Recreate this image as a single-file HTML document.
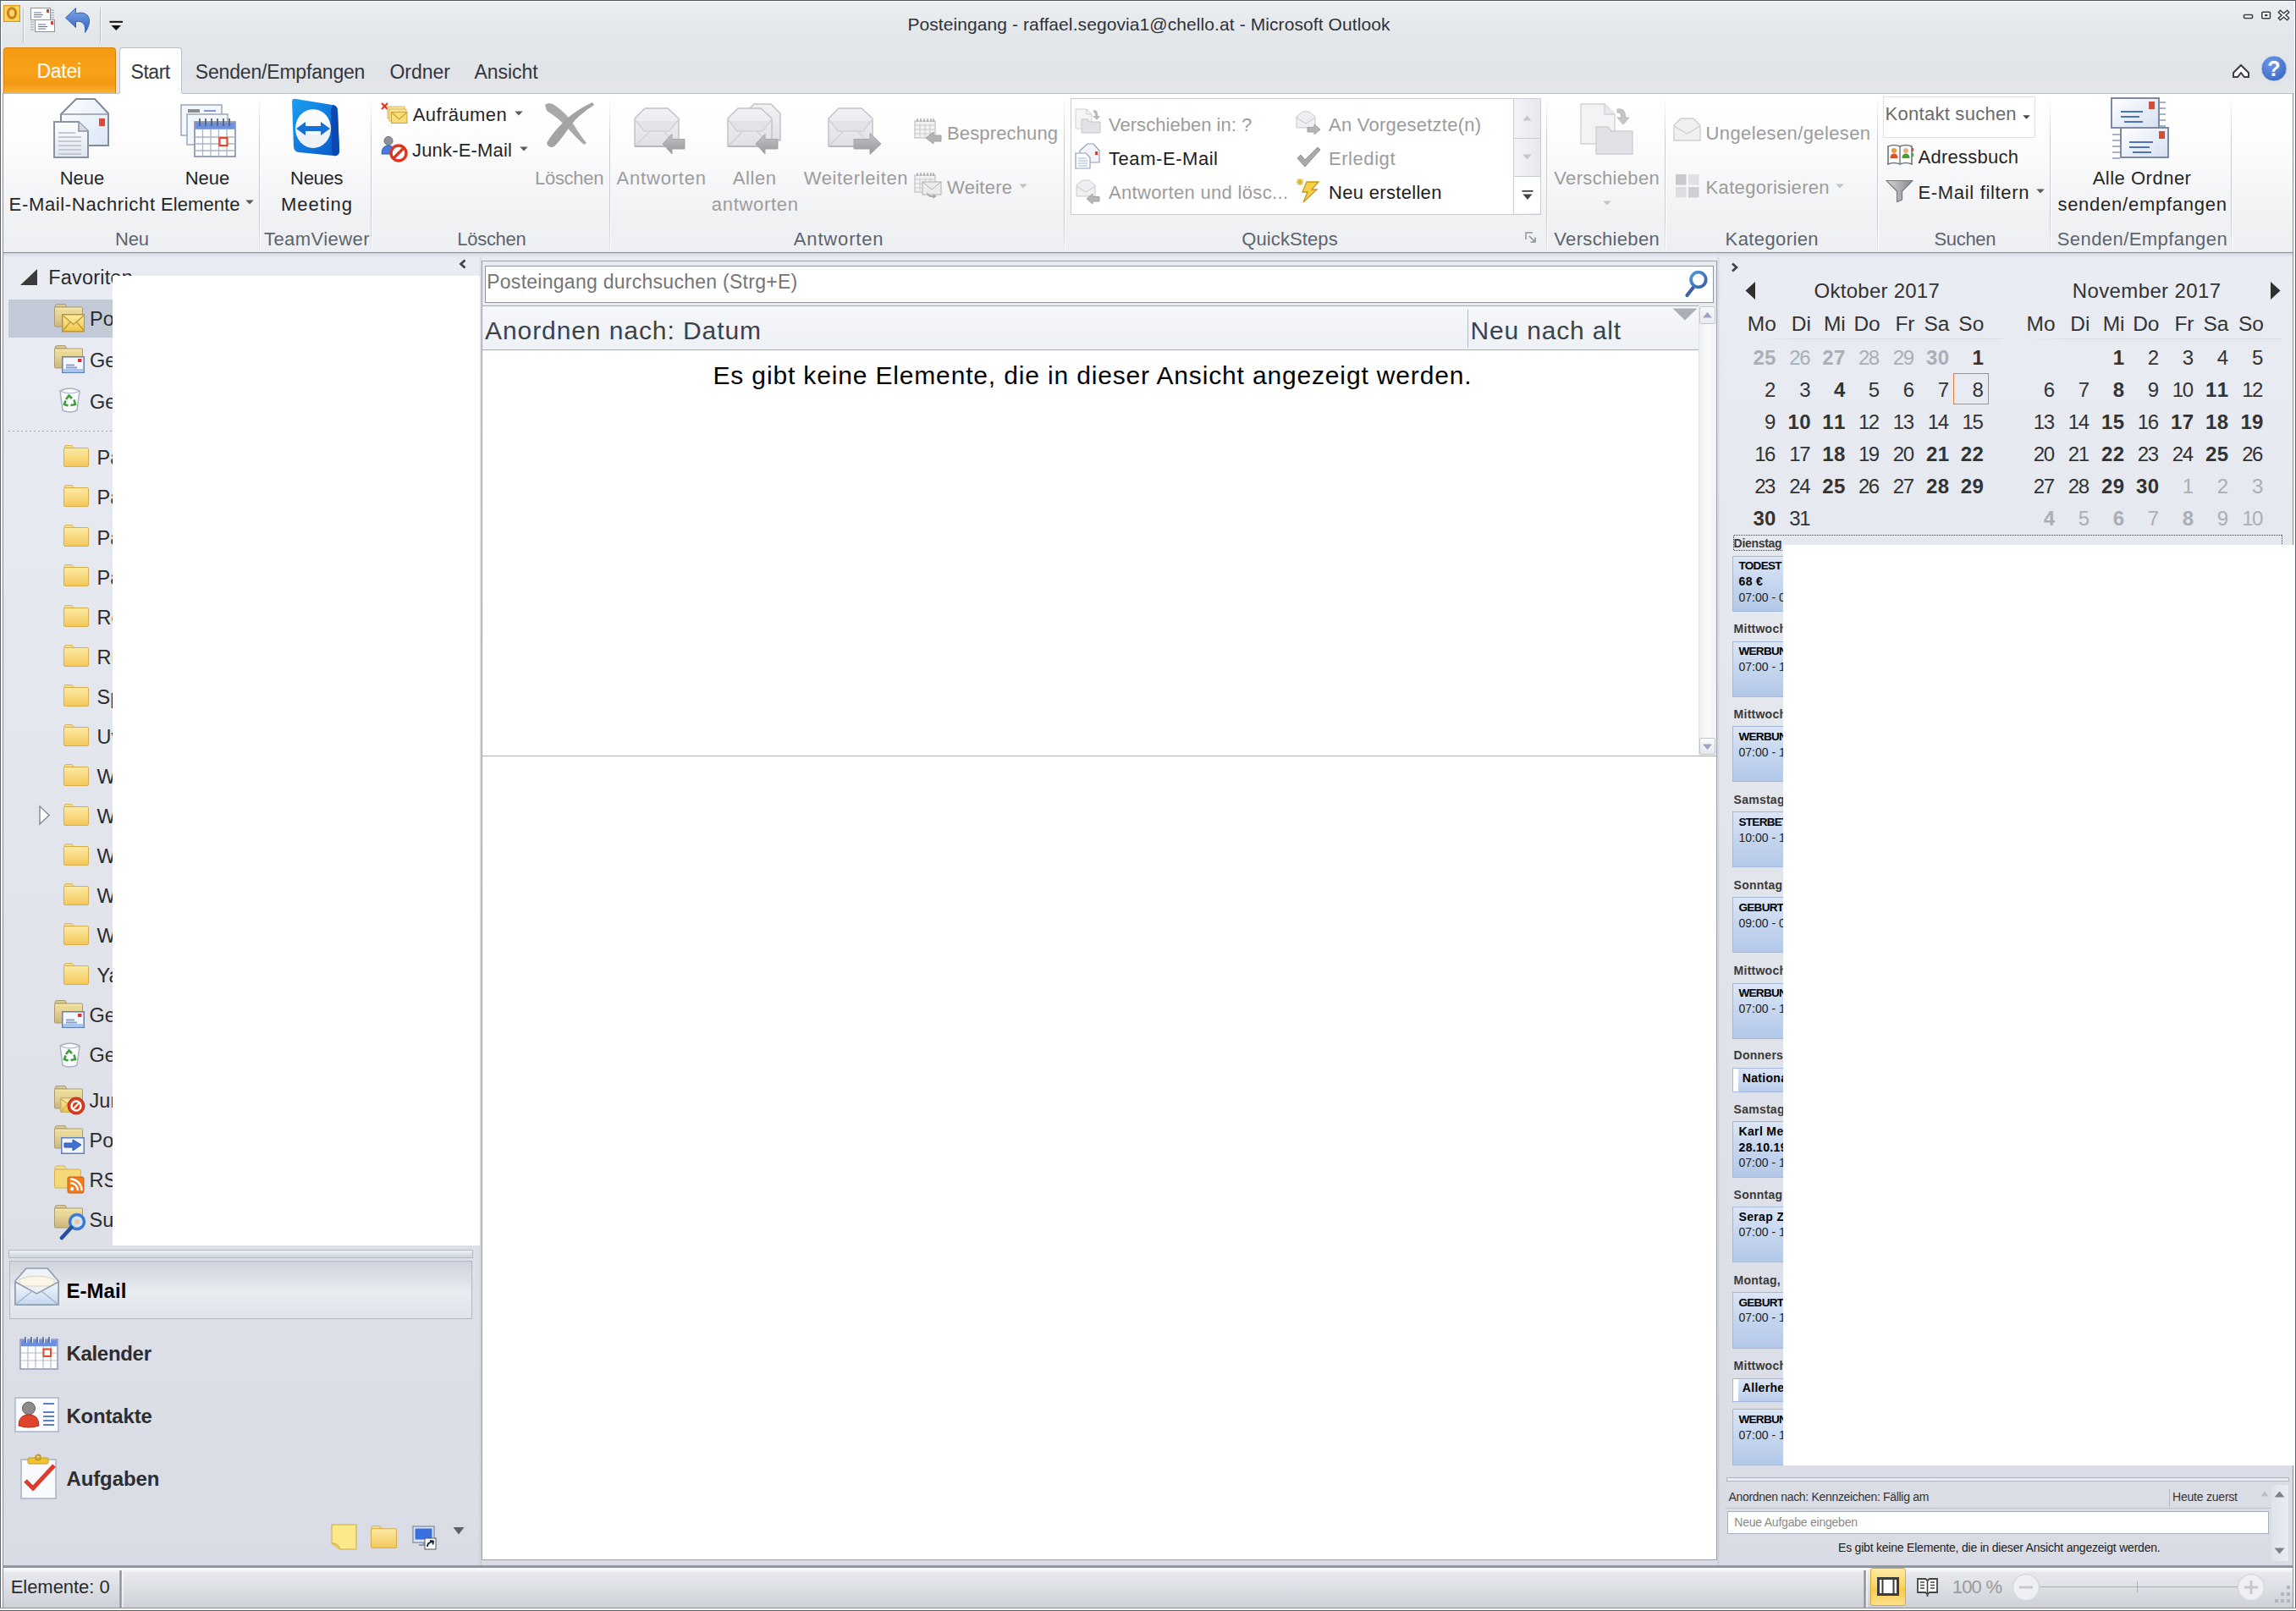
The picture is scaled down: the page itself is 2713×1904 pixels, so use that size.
<!DOCTYPE html>
<html lang="de"><head><meta charset="utf-8"><title>Posteingang - Microsoft Outlook</title>
<style>
html,body{margin:0;padding:0;}
body{width:2713px;height:1904px;overflow:hidden;position:relative;background:#dce0e6;font-family:"Liberation Sans",sans-serif;}
#w{position:absolute;left:0;top:0;width:2713px;height:1904px;overflow:hidden;}
#w div,#w span.t,#w svg{position:absolute;box-sizing:border-box;}
span.t{white-space:pre;display:block;}
</style></head><body><div id="w">
<div style="left:0px;top:0px;width:2713px;height:110px;background:linear-gradient(#ebeef0,#e4e7ea 40%,#e0e3e7 80%,#e5e7ea);"></div>
<div style="left:0px;top:0px;width:2713px;height:1px;background:#50555b;"></div>
<div style="left:1px;top:1px;width:2711px;height:1px;background:#fcfcfd;"></div>
<div style="left:0px;top:0px;width:1px;height:1904px;background:#5d636a;"></div>
<div style="left:1px;top:1px;width:1px;height:1904px;background:#fdfdfe;"></div>
<div style="left:2px;top:110px;width:1px;height:1904px;background:#fdfdfe;"></div>
<div style="left:3px;top:110px;width:1px;height:1904px;background:#8a8f97;"></div>
<div style="left:2709px;top:110px;width:1px;height:1904px;background:#8a8f97;"></div>
<div style="left:2710px;top:110px;width:1px;height:1904px;background:#fdfdfe;"></div>
<div style="left:2711px;top:1px;width:1px;height:1904px;background:#fdfdfe;"></div>
<div style="left:2712px;top:0px;width:1px;height:1904px;background:#5d636a;"></div>
<div style="left:0px;top:1900px;width:2713px;height:1px;background:#8b8f94;"></div>
<div style="left:0px;top:1901px;width:2713px;height:2px;background:#fdfdfe;"></div>
<div style="left:0px;top:1903px;width:2713px;height:1px;background:#5d636a;"></div>
<span class="t" style="left:1072.40px;top:18.00px;font-size:21px;line-height:21px;color:#2e3238;letter-spacing:0.087px;">Posteingang - raffael.segovia1@chello.at - Microsoft Outlook</span>
<svg style="left:2648px;top:10px" width="60" height="16" viewBox="0 0 60 16"><rect x="3.5" y="7.5" width="10" height="4" rx="1" fill="#fff" stroke="#3a3f46" stroke-width="1.6"/>
<rect x="24.8" y="4.3" width="9.6" height="7.4" rx="1" fill="#fff" stroke="#3a3f46" stroke-width="1.6"/><rect x="28" y="7" width="3.4" height="2.2" fill="#3a3f46"/>
<path d="M46.500 4.500 L54.500 11.500 M54.500 4.500 L46.500 11.500" stroke="#3a3f46" stroke-width="4.600" stroke-linecap="square"/><path d="M46.500 4.500 L54.500 11.500 M54.500 4.500 L46.500 11.500" stroke="#fff" stroke-width="1.700" stroke-linecap="square"/></svg>
<svg style="left:2636px;top:74px" width="24" height="20" viewBox="0 0 24 20"><path d="M3 17 L3 12 L12 3 L21 12 L21 17 L16 17 L12 12 L8 17 Z" fill="#fff" stroke="#3a3f46" stroke-width="2"/></svg>
<svg style="left:2670px;top:64px" width="34" height="34" viewBox="0 0 34 34"><defs><radialGradient id="hg" cx="0.4" cy="0.3" r="0.8"><stop offset="0" stop-color="#6c9ae6"/><stop offset="1" stop-color="#3864c0"/></radialGradient></defs>
<circle cx="17" cy="17" r="15" fill="url(#hg)" stroke="#c9d6f0" stroke-width="1"/>
<text x="17" y="26" font-family="Liberation Sans, sans-serif" font-weight="bold" font-size="25" fill="#fff" text-anchor="middle">?</text></svg>
<svg style="left:4px;top:6px" width="20" height="20" viewBox="0 0 20 20"><rect x="0.5" y="0.5" width="19" height="19" fill="#f6c63c" stroke="#d89b1e"/><rect x="2" y="2" width="16" height="16" fill="#fbe08a" opacity=".6"/>
<ellipse cx="10" cy="9.5" rx="4.6" ry="5.8" fill="none" stroke="#d17f0c" stroke-width="3"/></svg>
<div style="left:27px;top:9px;width:1px;height:41px;background:#b9bec6;"></div>
<div style="left:28px;top:9px;width:1px;height:41px;background:#f7f8fa;"></div>
<svg style="left:35px;top:8px" width="33" height="32" viewBox="0 0 33 32"><g stroke="#8b93a0" fill="#fff"><rect x="1.5" y="1.5" width="23" height="14"/><rect x="6.5" y="15.5" width="23" height="14" />
</g><g stroke="#9aa2ae" stroke-width="1"><path d="M25 4h4M25 7h4M25 10h4M25 13h4M1 18h4M1 21h4M1 24h4M1 27h4"/></g>
<rect x="20" y="3" width="3" height="4" fill="#d2423a"/><rect x="25" y="17" width="3" height="4" fill="#d2423a"/>
<path d="M5 7h9M5 9.5h11M5 12h9M10 21h9M10 23.500h11M10 26h9" stroke="#4f78b8" stroke-width="1.2"/></svg>
<svg style="left:76px;top:8px" width="34" height="32" viewBox="0 0 34 32"><defs><linearGradient id="ug" x1="0" y1="0" x2="0" y2="1"><stop offset="0" stop-color="#7fa8ea"/><stop offset="1" stop-color="#2f5fc0"/></linearGradient></defs>
<path d="M1.500 13 L13.500 1.500 L13.500 8 C26 4 36 13 24.500 30.500 C26 20.500 21 16 13.500 17.500 L13.500 24.500 Z" fill="url(#ug)" stroke="#3560b4" stroke-width="1"/></svg>
<div style="left:118px;top:9px;width:1px;height:41px;background:#b9bec6;"></div>
<div style="left:119px;top:9px;width:1px;height:41px;background:#f7f8fa;"></div>
<svg style="left:129px;top:24px" width="17" height="14" viewBox="0 0 17 14"><rect x="0.5" y="0.8" width="15.500" height="2" fill="#111"/><path d="M2.500 6 L14 6 L8.250 12 Z" fill="#111"/></svg>
<div style="left:4px;top:56px;width:133px;height:55px;border-radius:4px 4px 0 0;background:linear-gradient(#f39a12,#f8a21a 50%,#f49712 78%,#fbb63a);border:1px solid #d9820a;border-bottom:none;"></div>
<span class="t" style="left:43.50px;top:73.00px;font-size:23px;line-height:23px;color:#fff;letter-spacing:-0.298px;">Datei</span>
<div style="left:141px;top:56px;width:74px;height:56px;border-radius:4px 4px 0 0;background:#fff;border:1px solid #b9bfc8;border-bottom:none;"></div>
<span class="t" style="left:154.60px;top:74.00px;font-size:23px;line-height:23px;color:#33373d;letter-spacing:-0.492px;">Start</span>
<span class="t" style="left:230.80px;top:74.00px;font-size:23px;line-height:23px;color:#33373d;letter-spacing:-0.181px;">Senden/Empfangen</span>
<span class="t" style="left:460.40px;top:74.00px;font-size:23px;line-height:23px;color:#33373d;">Ordner</span>
<span class="t" style="left:560.40px;top:74.00px;font-size:23px;line-height:23px;color:#33373d;letter-spacing:-0.020px;">Ansicht</span>
<div style="left:4px;top:110px;width:2705px;height:189px;background:linear-gradient(#ffffff,#fcfcfd 35%,#f1f2f4 75%,#eeeff2);border-top:1px solid #b9bfc8;border-bottom:1px solid #8b9097;"></div>
<div style="left:141px;top:110px;width:74px;height:2px;background:#fff;"></div>
<div style="left:306px;top:114px;width:1px;height:181px;background:linear-gradient(rgba(200,205,212,0),#c6cbd2 30%,#c6cbd2 80%,rgba(200,205,212,.3));"></div>
<div style="left:307px;top:114px;width:1px;height:181px;background:linear-gradient(rgba(255,255,255,0),#fff 30%,#fff);"></div>
<div style="left:438px;top:114px;width:1px;height:181px;background:linear-gradient(rgba(200,205,212,0),#c6cbd2 30%,#c6cbd2 80%,rgba(200,205,212,.3));"></div>
<div style="left:439px;top:114px;width:1px;height:181px;background:linear-gradient(rgba(255,255,255,0),#fff 30%,#fff);"></div>
<div style="left:719.5px;top:114px;width:1px;height:181px;background:linear-gradient(rgba(200,205,212,0),#c6cbd2 30%,#c6cbd2 80%,rgba(200,205,212,.3));"></div>
<div style="left:720.5px;top:114px;width:1px;height:181px;background:linear-gradient(rgba(255,255,255,0),#fff 30%,#fff);"></div>
<div style="left:1257px;top:114px;width:1px;height:181px;background:linear-gradient(rgba(200,205,212,0),#c6cbd2 30%,#c6cbd2 80%,rgba(200,205,212,.3));"></div>
<div style="left:1258px;top:114px;width:1px;height:181px;background:linear-gradient(rgba(255,255,255,0),#fff 30%,#fff);"></div>
<div style="left:1827px;top:114px;width:1px;height:181px;background:linear-gradient(rgba(200,205,212,0),#c6cbd2 30%,#c6cbd2 80%,rgba(200,205,212,.3));"></div>
<div style="left:1828px;top:114px;width:1px;height:181px;background:linear-gradient(rgba(255,255,255,0),#fff 30%,#fff);"></div>
<div style="left:1967px;top:114px;width:1px;height:181px;background:linear-gradient(rgba(200,205,212,0),#c6cbd2 30%,#c6cbd2 80%,rgba(200,205,212,.3));"></div>
<div style="left:1968px;top:114px;width:1px;height:181px;background:linear-gradient(rgba(255,255,255,0),#fff 30%,#fff);"></div>
<div style="left:2218px;top:114px;width:1px;height:181px;background:linear-gradient(rgba(200,205,212,0),#c6cbd2 30%,#c6cbd2 80%,rgba(200,205,212,.3));"></div>
<div style="left:2219px;top:114px;width:1px;height:181px;background:linear-gradient(rgba(255,255,255,0),#fff 30%,#fff);"></div>
<div style="left:2422px;top:114px;width:1px;height:181px;background:linear-gradient(rgba(200,205,212,0),#c6cbd2 30%,#c6cbd2 80%,rgba(200,205,212,.3));"></div>
<div style="left:2423px;top:114px;width:1px;height:181px;background:linear-gradient(rgba(255,255,255,0),#fff 30%,#fff);"></div>
<div style="left:2636px;top:114px;width:1px;height:181px;background:linear-gradient(rgba(200,205,212,0),#c6cbd2 30%,#c6cbd2 80%,rgba(200,205,212,.3));"></div>
<div style="left:2637px;top:114px;width:1px;height:181px;background:linear-gradient(rgba(255,255,255,0),#fff 30%,#fff);"></div>
<span class="t" style="left:136.00px;top:272.00px;font-size:22px;line-height:22px;color:#5c6470;letter-spacing:-0.178px;">Neu</span>
<span class="t" style="left:312.00px;top:272.00px;font-size:22px;line-height:22px;color:#5c6470;letter-spacing:0.440px;">TeamViewer</span>
<span class="t" style="left:540.30px;top:272.00px;font-size:22px;line-height:22px;color:#5c6470;letter-spacing:-0.295px;">Löschen</span>
<span class="t" style="left:937.80px;top:272.00px;font-size:22px;line-height:22px;color:#5c6470;letter-spacing:0.844px;">Antworten</span>
<span class="t" style="left:1467.30px;top:272.00px;font-size:22px;line-height:22px;color:#5c6470;letter-spacing:0.101px;">QuickSteps</span>
<span class="t" style="left:1836.25px;top:272.00px;font-size:22px;line-height:22px;color:#5c6470;letter-spacing:0.342px;">Verschieben</span>
<span class="t" style="left:2038.60px;top:272.00px;font-size:22px;line-height:22px;color:#5c6470;letter-spacing:0.400px;">Kategorien</span>
<span class="t" style="left:2285.50px;top:272.00px;font-size:22px;line-height:22px;color:#5c6470;letter-spacing:-0.322px;">Suchen</span>
<span class="t" style="left:2430.70px;top:272.00px;font-size:22px;line-height:22px;color:#5c6470;letter-spacing:0.435px;">Senden/Empfangen</span>
<div style="left:4px;top:299px;width:2705px;height:1552px;background:linear-gradient(#cfd3dc 0,#e6e9f0 4px,#e9ecf2 8px,#d9dce4);"></div>
<div style="left:566px;top:303px;width:3px;height:1547px;background:linear-gradient(90deg,rgba(160,165,178,0),rgba(160,165,178,.35));"></div>
<svg style="left:541px;top:305px" width="12" height="14" viewBox="0 0 12 14"><path d="M8.500 2.500 L3.500 7 L8.500 11.500" fill="none" stroke="#3b4048" stroke-width="2.6"/></svg>
<svg style="left:22px;top:316px" width="24" height="23" viewBox="0 0 24 23"><path d="M2 21 L22 21 L22 2 Z" fill="#3a3a3a"/></svg>
<span class="t" style="left:57.30px;top:317.00px;font-size:23.5px;line-height:23.5px;color:#2b2b2b;letter-spacing:0.194px;">Favoriten</span>
<div style="left:10px;top:354px;width:556px;height:45px;background:#c3cad7;"></div>
<svg style="left:64px;top:358px" width="36" height="36" viewBox="0 0 36 36"><defs><linearGradient id="bf" x1="0" y1="0" x2="0" y2="1"><stop offset="0" stop-color="#f6e6a8"/><stop offset="1" stop-color="#cdb57c"/></linearGradient></defs>
<path d="M1 4 Q1 1.500 4 1.500 L13 1.500 L15 5 L1 5 Z" fill="#dccb92" stroke="#a99b76"/><rect x="0.500" y="5" width="33" height="23" rx="1" fill="url(#bf)" stroke="#a99b76"/>
<path d="M1 9.500 L33 9.500" stroke="#e9d690" stroke-width="2"/></svg>
<svg style="left:72.5px;top:371px" width="27.5" height="21.5" viewBox="0 0 27.5 21.5"><defs><linearGradient id="ey" x1="0" y1="0" x2="0" y2="1"><stop offset="0" stop-color="#fdeea0"/><stop offset="1" stop-color="#efc548"/></linearGradient></defs>
<rect x="0.750" y="0.750" width="26" height="20" fill="url(#ey)" stroke="#b9963a" stroke-width="1.500"/><path d="M1.500 2 L13.75 12.47 L26 2 M1.500 19.5 L9.9 9.675 M26 19.5 L17.6 9.675" fill="none" stroke="#b9963a" stroke-width="1.300"/></svg>
<span class="t" style="left:106.00px;top:366.00px;font-size:23.5px;line-height:23.5px;color:#2b2b2b;">Po</span>
<svg style="left:64px;top:407px" width="36" height="36" viewBox="0 0 36 36"><defs><linearGradient id="bf" x1="0" y1="0" x2="0" y2="1"><stop offset="0" stop-color="#f6e6a8"/><stop offset="1" stop-color="#cdb57c"/></linearGradient></defs>
<path d="M1 4 Q1 1.500 4 1.500 L13 1.500 L15 5 L1 5 Z" fill="#dccb92" stroke="#a99b76"/><rect x="0.500" y="5" width="33" height="23" rx="1" fill="url(#bf)" stroke="#a99b76"/>
<path d="M1 9.500 L33 9.500" stroke="#e9d690" stroke-width="2"/></svg>
<svg style="left:73px;top:421px" width="27" height="20" viewBox="0 0 27 20"><rect x="0.750" y="0.750" width="25.500" height="18.500" fill="#f4f7fc" stroke="#5e7fbf" stroke-width="1.500"/><rect x="19" y="3" width="4.500" height="4" fill="#d33b2f"/><path d="M5 10.500h10M5 13.500h13" stroke="#8aa0c8" stroke-width="2"/><rect x="1.500" y="15" width="24" height="3.500" fill="#aec3e8"/></svg>
<span class="t" style="left:106.00px;top:415.00px;font-size:23.5px;line-height:23.5px;color:#2b2b2b;">Ge</span>
<svg style="left:69px;top:457px" width="27" height="31" viewBox="0 0 27 31"><path d="M2 5 Q13.500 -1 25 5 L22 28 Q13.500 32 5 28 Z" fill="#f8fafc" stroke="#aab3c2" stroke-width="1.500"/><path d="M2.500 5.500 Q13.500 10 24.500 5.500" fill="none" stroke="#aab3c2" stroke-width="1.200"/>
<g fill="none" stroke="#3f9d3b" stroke-width="2.600"><path d="M9 15 L12.500 10.500 L16 14"/><path d="M18.500 15.500 L20 21 L14.500 22"/><path d="M11.500 22.500 L7 21 L8.500 16.500"/></g></svg>
<span class="t" style="left:106.00px;top:464.00px;font-size:23.5px;line-height:23.5px;color:#2b2b2b;">Ge</span>
<div style="left:10px;top:509px;width:556px;height:1px;background:repeating-linear-gradient(90deg,#9da5b1 0 2px,transparent 2px 5px);"></div>
<svg style="left:75px;top:525.3px" width="30" height="27" viewBox="0 0 30 27"><defs><linearGradient id="fg" x1="0" y1="0" x2="0" y2="1"><stop offset="0" stop-color="#fdeaa6"/><stop offset="1" stop-color="#f3c85a"/></linearGradient></defs>
<path d="M1 3.500 Q1 1.500 3 1.500 L10 1.500 L12.500 4.500 L1 4.500 Z" fill="#f6dc8c" stroke="#d9b65a" stroke-width="1"/>
<rect x="0.500" y="4.500" width="29" height="22" rx="1.500" fill="url(#fg)" stroke="#d7ae4a" stroke-width="1"/></svg>
<span class="t" style="left:114.50px;top:530.00px;font-size:23.5px;line-height:23.5px;color:#2b2b2b;">Pa</span>
<svg style="left:75px;top:572.35px" width="30" height="27" viewBox="0 0 30 27"><defs><linearGradient id="fg" x1="0" y1="0" x2="0" y2="1"><stop offset="0" stop-color="#fdeaa6"/><stop offset="1" stop-color="#f3c85a"/></linearGradient></defs>
<path d="M1 3.500 Q1 1.500 3 1.500 L10 1.500 L12.500 4.500 L1 4.500 Z" fill="#f6dc8c" stroke="#d9b65a" stroke-width="1"/>
<rect x="0.500" y="4.500" width="29" height="22" rx="1.500" fill="url(#fg)" stroke="#d7ae4a" stroke-width="1"/></svg>
<span class="t" style="left:114.50px;top:577.00px;font-size:23.5px;line-height:23.5px;color:#2b2b2b;">Pa</span>
<svg style="left:75px;top:619.4px" width="30" height="27" viewBox="0 0 30 27"><defs><linearGradient id="fg" x1="0" y1="0" x2="0" y2="1"><stop offset="0" stop-color="#fdeaa6"/><stop offset="1" stop-color="#f3c85a"/></linearGradient></defs>
<path d="M1 3.500 Q1 1.500 3 1.500 L10 1.500 L12.500 4.500 L1 4.500 Z" fill="#f6dc8c" stroke="#d9b65a" stroke-width="1"/>
<rect x="0.500" y="4.500" width="29" height="22" rx="1.500" fill="url(#fg)" stroke="#d7ae4a" stroke-width="1"/></svg>
<span class="t" style="left:114.50px;top:625.00px;font-size:23.5px;line-height:23.5px;color:#2b2b2b;">Pa</span>
<svg style="left:75px;top:666.45px" width="30" height="27" viewBox="0 0 30 27"><defs><linearGradient id="fg" x1="0" y1="0" x2="0" y2="1"><stop offset="0" stop-color="#fdeaa6"/><stop offset="1" stop-color="#f3c85a"/></linearGradient></defs>
<path d="M1 3.500 Q1 1.500 3 1.500 L10 1.500 L12.500 4.500 L1 4.500 Z" fill="#f6dc8c" stroke="#d9b65a" stroke-width="1"/>
<rect x="0.500" y="4.500" width="29" height="22" rx="1.500" fill="url(#fg)" stroke="#d7ae4a" stroke-width="1"/></svg>
<span class="t" style="left:114.50px;top:672.00px;font-size:23.5px;line-height:23.5px;color:#2b2b2b;">Pa</span>
<svg style="left:75px;top:713.5px" width="30" height="27" viewBox="0 0 30 27"><defs><linearGradient id="fg" x1="0" y1="0" x2="0" y2="1"><stop offset="0" stop-color="#fdeaa6"/><stop offset="1" stop-color="#f3c85a"/></linearGradient></defs>
<path d="M1 3.500 Q1 1.500 3 1.500 L10 1.500 L12.500 4.500 L1 4.500 Z" fill="#f6dc8c" stroke="#d9b65a" stroke-width="1"/>
<rect x="0.500" y="4.500" width="29" height="22" rx="1.500" fill="url(#fg)" stroke="#d7ae4a" stroke-width="1"/></svg>
<span class="t" style="left:114.50px;top:719.00px;font-size:23.5px;line-height:23.5px;color:#2b2b2b;">Re</span>
<svg style="left:75px;top:760.55px" width="30" height="27" viewBox="0 0 30 27"><defs><linearGradient id="fg" x1="0" y1="0" x2="0" y2="1"><stop offset="0" stop-color="#fdeaa6"/><stop offset="1" stop-color="#f3c85a"/></linearGradient></defs>
<path d="M1 3.500 Q1 1.500 3 1.500 L10 1.500 L12.500 4.500 L1 4.500 Z" fill="#f6dc8c" stroke="#d9b65a" stroke-width="1"/>
<rect x="0.500" y="4.500" width="29" height="22" rx="1.500" fill="url(#fg)" stroke="#d7ae4a" stroke-width="1"/></svg>
<span class="t" style="left:114.50px;top:766.00px;font-size:23.5px;line-height:23.5px;color:#2b2b2b;">Ru</span>
<svg style="left:75px;top:807.6px" width="30" height="27" viewBox="0 0 30 27"><defs><linearGradient id="fg" x1="0" y1="0" x2="0" y2="1"><stop offset="0" stop-color="#fdeaa6"/><stop offset="1" stop-color="#f3c85a"/></linearGradient></defs>
<path d="M1 3.500 Q1 1.500 3 1.500 L10 1.500 L12.500 4.500 L1 4.500 Z" fill="#f6dc8c" stroke="#d9b65a" stroke-width="1"/>
<rect x="0.500" y="4.500" width="29" height="22" rx="1.500" fill="url(#fg)" stroke="#d7ae4a" stroke-width="1"/></svg>
<span class="t" style="left:114.50px;top:813.00px;font-size:23.5px;line-height:23.5px;color:#2b2b2b;">Sp</span>
<svg style="left:75px;top:854.65px" width="30" height="27" viewBox="0 0 30 27"><defs><linearGradient id="fg" x1="0" y1="0" x2="0" y2="1"><stop offset="0" stop-color="#fdeaa6"/><stop offset="1" stop-color="#f3c85a"/></linearGradient></defs>
<path d="M1 3.500 Q1 1.500 3 1.500 L10 1.500 L12.500 4.500 L1 4.500 Z" fill="#f6dc8c" stroke="#d9b65a" stroke-width="1"/>
<rect x="0.500" y="4.500" width="29" height="22" rx="1.500" fill="url(#fg)" stroke="#d7ae4a" stroke-width="1"/></svg>
<span class="t" style="left:114.50px;top:860.00px;font-size:23.5px;line-height:23.5px;color:#2b2b2b;">Uv</span>
<svg style="left:75px;top:901.7px" width="30" height="27" viewBox="0 0 30 27"><defs><linearGradient id="fg" x1="0" y1="0" x2="0" y2="1"><stop offset="0" stop-color="#fdeaa6"/><stop offset="1" stop-color="#f3c85a"/></linearGradient></defs>
<path d="M1 3.500 Q1 1.500 3 1.500 L10 1.500 L12.500 4.500 L1 4.500 Z" fill="#f6dc8c" stroke="#d9b65a" stroke-width="1"/>
<rect x="0.500" y="4.500" width="29" height="22" rx="1.500" fill="url(#fg)" stroke="#d7ae4a" stroke-width="1"/></svg>
<span class="t" style="left:114.50px;top:907.00px;font-size:23.5px;line-height:23.5px;color:#2b2b2b;">W</span>
<svg style="left:75px;top:948.75px" width="30" height="27" viewBox="0 0 30 27"><defs><linearGradient id="fg" x1="0" y1="0" x2="0" y2="1"><stop offset="0" stop-color="#fdeaa6"/><stop offset="1" stop-color="#f3c85a"/></linearGradient></defs>
<path d="M1 3.500 Q1 1.500 3 1.500 L10 1.500 L12.500 4.500 L1 4.500 Z" fill="#f6dc8c" stroke="#d9b65a" stroke-width="1"/>
<rect x="0.500" y="4.500" width="29" height="22" rx="1.500" fill="url(#fg)" stroke="#d7ae4a" stroke-width="1"/></svg>
<span class="t" style="left:114.50px;top:954.00px;font-size:23.5px;line-height:23.5px;color:#2b2b2b;">W</span>
<svg style="left:75px;top:995.8px" width="30" height="27" viewBox="0 0 30 27"><defs><linearGradient id="fg" x1="0" y1="0" x2="0" y2="1"><stop offset="0" stop-color="#fdeaa6"/><stop offset="1" stop-color="#f3c85a"/></linearGradient></defs>
<path d="M1 3.500 Q1 1.500 3 1.500 L10 1.500 L12.500 4.500 L1 4.500 Z" fill="#f6dc8c" stroke="#d9b65a" stroke-width="1"/>
<rect x="0.500" y="4.500" width="29" height="22" rx="1.500" fill="url(#fg)" stroke="#d7ae4a" stroke-width="1"/></svg>
<span class="t" style="left:114.50px;top:1001.00px;font-size:23.5px;line-height:23.5px;color:#2b2b2b;">W</span>
<svg style="left:75px;top:1042.85px" width="30" height="27" viewBox="0 0 30 27"><defs><linearGradient id="fg" x1="0" y1="0" x2="0" y2="1"><stop offset="0" stop-color="#fdeaa6"/><stop offset="1" stop-color="#f3c85a"/></linearGradient></defs>
<path d="M1 3.500 Q1 1.500 3 1.500 L10 1.500 L12.500 4.500 L1 4.500 Z" fill="#f6dc8c" stroke="#d9b65a" stroke-width="1"/>
<rect x="0.500" y="4.500" width="29" height="22" rx="1.500" fill="url(#fg)" stroke="#d7ae4a" stroke-width="1"/></svg>
<span class="t" style="left:114.50px;top:1048.00px;font-size:23.5px;line-height:23.5px;color:#2b2b2b;">W</span>
<svg style="left:75px;top:1089.9px" width="30" height="27" viewBox="0 0 30 27"><defs><linearGradient id="fg" x1="0" y1="0" x2="0" y2="1"><stop offset="0" stop-color="#fdeaa6"/><stop offset="1" stop-color="#f3c85a"/></linearGradient></defs>
<path d="M1 3.500 Q1 1.500 3 1.500 L10 1.500 L12.500 4.500 L1 4.500 Z" fill="#f6dc8c" stroke="#d9b65a" stroke-width="1"/>
<rect x="0.500" y="4.500" width="29" height="22" rx="1.500" fill="url(#fg)" stroke="#d7ae4a" stroke-width="1"/></svg>
<span class="t" style="left:114.50px;top:1095.00px;font-size:23.5px;line-height:23.5px;color:#2b2b2b;">W</span>
<svg style="left:75px;top:1136.95px" width="30" height="27" viewBox="0 0 30 27"><defs><linearGradient id="fg" x1="0" y1="0" x2="0" y2="1"><stop offset="0" stop-color="#fdeaa6"/><stop offset="1" stop-color="#f3c85a"/></linearGradient></defs>
<path d="M1 3.500 Q1 1.500 3 1.500 L10 1.500 L12.500 4.500 L1 4.500 Z" fill="#f6dc8c" stroke="#d9b65a" stroke-width="1"/>
<rect x="0.500" y="4.500" width="29" height="22" rx="1.500" fill="url(#fg)" stroke="#d7ae4a" stroke-width="1"/></svg>
<span class="t" style="left:114.50px;top:1142.00px;font-size:23.5px;line-height:23.5px;color:#2b2b2b;">Ya</span>
<svg style="left:45px;top:951px" width="15" height="25" viewBox="0 0 15 25"><path d="M2 2 L13 12.500 L2 23 Z" fill="#fff" stroke="#8a8f98" stroke-width="1.500"/></svg>
<svg style="left:64px;top:1181px" width="36" height="36" viewBox="0 0 36 36"><defs><linearGradient id="bf" x1="0" y1="0" x2="0" y2="1"><stop offset="0" stop-color="#f6e6a8"/><stop offset="1" stop-color="#cdb57c"/></linearGradient></defs>
<path d="M1 4 Q1 1.500 4 1.500 L13 1.500 L15 5 L1 5 Z" fill="#dccb92" stroke="#a99b76"/><rect x="0.500" y="5" width="33" height="23" rx="1" fill="url(#bf)" stroke="#a99b76"/>
<path d="M1 9.500 L33 9.500" stroke="#e9d690" stroke-width="2"/></svg>
<svg style="left:73px;top:1195px" width="27" height="20" viewBox="0 0 27 20"><rect x="0.750" y="0.750" width="25.500" height="18.500" fill="#f4f7fc" stroke="#5e7fbf" stroke-width="1.500"/><rect x="19" y="3" width="4.500" height="4" fill="#d33b2f"/><path d="M5 10.500h10M5 13.500h13" stroke="#8aa0c8" stroke-width="2"/><rect x="1.500" y="15" width="24" height="3.500" fill="#aec3e8"/></svg>
<span class="t" style="left:105.60px;top:1189.00px;font-size:23.5px;line-height:23.5px;color:#2b2b2b;">Ge</span>
<svg style="left:69px;top:1231px" width="27" height="31" viewBox="0 0 27 31"><path d="M2 5 Q13.500 -1 25 5 L22 28 Q13.500 32 5 28 Z" fill="#f8fafc" stroke="#aab3c2" stroke-width="1.500"/><path d="M2.500 5.500 Q13.500 10 24.500 5.500" fill="none" stroke="#aab3c2" stroke-width="1.200"/>
<g fill="none" stroke="#3f9d3b" stroke-width="2.600"><path d="M9 15 L12.500 10.500 L16 14"/><path d="M18.500 15.500 L20 21 L14.500 22"/><path d="M11.500 22.500 L7 21 L8.500 16.500"/></g></svg>
<span class="t" style="left:105.60px;top:1236.00px;font-size:23.5px;line-height:23.5px;color:#2b2b2b;">Ge</span>
<svg style="left:64px;top:1282px" width="36" height="36" viewBox="0 0 36 36"><defs><linearGradient id="bf" x1="0" y1="0" x2="0" y2="1"><stop offset="0" stop-color="#f6e6a8"/><stop offset="1" stop-color="#cdb57c"/></linearGradient></defs>
<path d="M1 4 Q1 1.500 4 1.500 L13 1.500 L15 5 L1 5 Z" fill="#dccb92" stroke="#a99b76"/><rect x="0.500" y="5" width="33" height="23" rx="1" fill="url(#bf)" stroke="#a99b76"/>
<path d="M1 9.500 L33 9.500" stroke="#e9d690" stroke-width="2"/></svg>
<svg style="left:71px;top:1297px" width="25" height="18" viewBox="0 0 25 18"><defs><linearGradient id="ey" x1="0" y1="0" x2="0" y2="1"><stop offset="0" stop-color="#fdeea0"/><stop offset="1" stop-color="#efc548"/></linearGradient></defs>
<rect x="0.750" y="0.750" width="23.5" height="16.5" fill="url(#ey)" stroke="#c8b070" stroke-width="1.500"/><path d="M1.500 2 L12.5 10.44 L23.5 2 M1.500 16 L9 8.1 M23.5 16 L16 8.1" fill="none" stroke="#c8b070" stroke-width="1.300"/></svg>
<svg style="left:79px;top:1296px" width="22" height="22" viewBox="0 0 22 22"><circle cx="11" cy="11" r="10" fill="#dc3a1e" stroke="#b52a12"/><circle cx="11" cy="11" r="5.500" fill="none" stroke="#fff" stroke-width="2.400"/><path d="M7 15 L15 7" stroke="#fff" stroke-width="2.400"/></svg>
<span class="t" style="left:105.60px;top:1290.00px;font-size:23.5px;line-height:23.5px;color:#2b2b2b;">Jun</span>
<svg style="left:64px;top:1329px" width="36" height="36" viewBox="0 0 36 36"><defs><linearGradient id="bf" x1="0" y1="0" x2="0" y2="1"><stop offset="0" stop-color="#f6e6a8"/><stop offset="1" stop-color="#cdb57c"/></linearGradient></defs>
<path d="M1 4 Q1 1.500 4 1.500 L13 1.500 L15 5 L1 5 Z" fill="#dccb92" stroke="#a99b76"/><rect x="0.500" y="5" width="33" height="23" rx="1" fill="url(#bf)" stroke="#a99b76"/>
<path d="M1 9.500 L33 9.500" stroke="#e9d690" stroke-width="2"/></svg>
<svg style="left:72px;top:1344px" width="28" height="20" viewBox="0 0 28 20"><rect x="0.750" y="0.750" width="26.500" height="18.500" fill="#f1f5fb" stroke="#5e7fbf" stroke-width="1.500"/><path d="M4 12 L14 12 L14 16 L24 9 L14 3 L14 7 L4 7 Z" fill="#3f73d6" stroke="#2a55ae"/></svg>
<span class="t" style="left:105.60px;top:1337.00px;font-size:23.5px;line-height:23.5px;color:#2b2b2b;">Po</span>
<svg style="left:64px;top:1376px" width="36" height="36" viewBox="0 0 36 36"><path d="M1 5 Q1 2 4 2 L12 2 L15 6 L1 6 Z" fill="#f3dc8c" stroke="#d3b256"/><rect x="0.500" y="6" width="31" height="22" rx="1.500" fill="#f7d878" stroke="#d3b256"/>
<rect x="16" y="15" width="19" height="19" rx="2" fill="#f07c1c" stroke="#c85e0c"/><circle cx="21" cy="29" r="2.200" fill="#fff"/><path d="M19 22 A9 9 0 0 1 28 31 M19 17.500 A13.500 13.500 0 0 1 32.500 31" fill="none" stroke="#fff" stroke-width="2.400"/></svg>
<span class="t" style="left:105.60px;top:1384.00px;font-size:23.5px;line-height:23.5px;color:#2b2b2b;">RS</span>
<svg style="left:64px;top:1423px" width="36" height="36" viewBox="0 0 36 36"><defs><linearGradient id="bf" x1="0" y1="0" x2="0" y2="1"><stop offset="0" stop-color="#f6e6a8"/><stop offset="1" stop-color="#cdb57c"/></linearGradient></defs>
<path d="M1 4 Q1 1.500 4 1.500 L13 1.500 L15 5 L1 5 Z" fill="#dccb92" stroke="#a99b76"/><rect x="0.500" y="5" width="33" height="23" rx="1" fill="url(#bf)" stroke="#a99b76"/>
<path d="M1 9.500 L33 9.500" stroke="#e9d690" stroke-width="2"/></svg>
<svg style="left:70px;top:1432px" width="34" height="34" viewBox="0 0 34 34"><circle cx="21" cy="12" r="8.500" fill="#cfe3fa" stroke="#3e78d0" stroke-width="3.500"/><circle cx="21" cy="12" r="3" fill="#f6c890"/><path d="M14 19 L3 31" stroke="#274f9c" stroke-width="4.500" stroke-linecap="round"/></svg>
<span class="t" style="left:105.60px;top:1431.00px;font-size:23.5px;line-height:23.5px;color:#2b2b2b;">Su</span>
<div style="left:133px;top:326px;width:434px;height:1145.5px;background:#fff;"></div>
<div style="left:10px;top:1477px;width:549px;height:10px;background:linear-gradient(#eceff3,#d0d5dd);border:1px solid #b3bac5;"></div>
<div style="left:11px;top:1490px;width:547px;height:69px;background:linear-gradient(#cfd4dc,#e9ecf1 55%,#dfe3e9);border:1px solid #b2b9c4;"></div>
<svg style="left:17px;top:1496px" width="53" height="47" viewBox="0 0 53 47"><defs><linearGradient id="eg" x1="0" y1="0" x2="0" y2="1"><stop offset="0" stop-color="#f4f8fd"/><stop offset="1" stop-color="#c4d8f0"/></linearGradient></defs>
<path d="M1 18 L14 3 L39 3 L52 18 L52 46 L1 46 Z" fill="#eef3fa" stroke="#8d99ab" stroke-width="1.500"/>
<path d="M6 16 Q26 8 47 16 L47 24 L6 24 Z" fill="#fbf6e4" stroke="#d8d2bc"/>
<path d="M1 19 L26.500 33 L52 19 L52 46 L1 46 Z" fill="url(#eg)" stroke="#8d99ab" stroke-width="1.500"/><path d="M1 46 L21 30 M52 46 L32 30" stroke="#9fb0c8" stroke-width="1.200"/></svg>
<span class="t" style="left:78.40px;top:1514.00px;font-size:24px;line-height:24px;color:#000;font-weight:bold;letter-spacing:0.066px;">E-Mail</span>
<svg style="left:23px;top:1579px" width="46" height="40" viewBox="0 0 46 40"><rect x="1" y="4" width="44" height="35" fill="#fff" stroke="#8a98b4" stroke-width="1.500"/><rect x="1.700" y="4.700" width="42.600" height="7.500" fill="#6c8fe0"/>
<g stroke="#b3bccd" stroke-width="1.200"><path d="M1 20h44M1 29h44M10 12v27M19 12v27M28 12v27M37 12v27"/></g>
<g stroke="#5b6a86" stroke-width="1.600"><path d="M7 1v7M14 1v7M21 1v7M28 1v7M35 1v7"/></g><g stroke="#fff" stroke-width="1"><path d="M8.500 2v6M15.500 2v6M22.500 2v6M29.500 2v6M36.500 2v6"/></g>
<rect x="28.500" y="15.500" width="8.500" height="8.500" fill="#fff" stroke="#e24a2a" stroke-width="2"/></svg>
<span class="t" style="left:78.40px;top:1588.00px;font-size:24px;line-height:24px;color:#2e2e2e;font-weight:bold;letter-spacing:-0.300px;">Kalender</span>
<svg style="left:17px;top:1651px" width="53" height="42" viewBox="0 0 53 42"><rect x="1" y="1" width="51" height="40" fill="#f9fbfe" stroke="#a9b5cb" stroke-width="1.500"/>
<circle cx="17" cy="13.500" r="7.500" fill="#8c8c8c" stroke="#5e5e5e"/><path d="M5 34 Q5 21 17 21 Q29 21 29 34 Q17 38 5 34 Z" fill="#e0442a" stroke="#b52f1a"/>
<g stroke="#5b80cc" stroke-width="2"><path d="M34 8h13M34 18h13M34 23h13M34 28h13M34 33h13"/></g></svg>
<span class="t" style="left:78.40px;top:1662.00px;font-size:24px;line-height:24px;color:#2e2e2e;font-weight:bold;letter-spacing:-0.182px;">Kontakte</span>
<svg style="left:24px;top:1718px" width="44" height="54" viewBox="0 0 44 54"><rect x="1" y="7" width="41" height="46" fill="#f8fafd" stroke="#a8b2c6" stroke-width="1.500"/><rect x="9" y="5" width="24" height="7" rx="1.500" fill="#f1c232" stroke="#c89a1a"/><circle cx="21" cy="4.500" r="3" fill="none" stroke="#c89a1a" stroke-width="1.800"/>
<path d="M6 32 L15 41 L40 14" fill="none" stroke="#e03a2a" stroke-width="5"/></svg>
<span class="t" style="left:78.40px;top:1736.00px;font-size:24px;line-height:24px;color:#2e2e2e;font-weight:bold;letter-spacing:-0.093px;">Aufgaben</span>
<svg style="left:391px;top:1801px" width="31" height="31" viewBox="0 0 31 31"><path d="M1 1 L30 1 L30 30 L11 30 L1 23 Z" fill="#fbe98c" stroke="#d9bf55" stroke-width="1.500"/><path d="M1 23 Q8 22 11 30" fill="#e8cf60" stroke="#c9ad45"/></svg>
<svg style="left:438px;top:1802px" width="31" height="28" viewBox="0 0 30 27"><defs><linearGradient id="fg" x1="0" y1="0" x2="0" y2="1"><stop offset="0" stop-color="#fdeaa6"/><stop offset="1" stop-color="#f3c85a"/></linearGradient></defs>
<path d="M1 3.500 Q1 1.500 3 1.500 L10 1.500 L12.500 4.500 L1 4.500 Z" fill="#f6dc8c" stroke="#d9b65a" stroke-width="1"/>
<rect x="0.500" y="4.500" width="29" height="22" rx="1.500" fill="url(#fg)" stroke="#d7ae4a" stroke-width="1"/></svg>
<svg style="left:487px;top:1803px" width="29" height="29" viewBox="0 0 29 29"><rect x="1" y="1" width="25" height="19" fill="#dfe7f5" stroke="#8a96ab" stroke-width="1.500"/><rect x="3.500" y="3.500" width="20" height="13" fill="#3a6fe0"/><path d="M8 23h11M13.500 20v3" stroke="#8a96ab" stroke-width="2"/><rect x="15" y="15" width="13" height="13" fill="#fff" stroke="#555"/><path d="M18 25 Q18 20 24 19 M21 18 L25 18.500 L24.500 22.500" fill="none" stroke="#123" stroke-width="1.800"/></svg>
<svg style="left:535px;top:1804px" width="14" height="10" viewBox="0 0 14 10"><path d="M0.500 1 L13.500 1 L7 9.500 Z" fill="#5a5f68"/></svg>
<div style="left:4px;top:1850px;width:2705px;height:3px;background:#9196a0;"></div>
<div style="left:4px;top:1853px;width:2705px;height:47px;background:linear-gradient(#fbfcfd 0,#f3f5f8 3px,#e7e9ee 6px,#dcdfe4 50%,#cdd0d6);"></div>
<span class="t" style="left:12.70px;top:1865.00px;font-size:22px;line-height:22px;color:#2b2b2b;letter-spacing:-0.039px;">Elemente: 0</span>
<div style="left:141px;top:1856px;width:3px;height:44px;background:linear-gradient(90deg,#b9bcc2,#8d9096 50%,#b9bcc2);"></div>
<div style="left:144px;top:1856px;width:2px;height:44px;background:rgba(255,255,255,.55);"></div>
<div style="left:569px;top:308px;width:1460px;height:1536px;background:#fff;border:1px solid #9ea3ab;"></div>
<div style="left:570px;top:309px;width:1458px;height:53px;background:#e8ebf1;"></div>
<div style="left:573px;top:314px;width:1452px;height:44px;background:#fff;border:1px solid #9196a0;"></div>
<span class="t" style="left:575.20px;top:322.00px;font-size:23px;line-height:23px;color:#757575;letter-spacing:0.271px;">Posteingang durchsuchen (Strg+E)</span>
<svg style="left:1988px;top:319px" width="30" height="34" viewBox="0 0 30 34"><defs><linearGradient id="mg" x1="0" y1="0" x2="1" y2="1"><stop offset="0" stop-color="#4f9be0"/><stop offset="1" stop-color="#3a5ca8"/></linearGradient></defs>
<path d="M5.500 30 L13 20.500" stroke="#3d62a4" stroke-width="4.200" stroke-linecap="round"/><circle cx="18.900" cy="11.500" r="8.800" fill="#fff" stroke="url(#mg)" stroke-width="3.800"/></svg>
<div style="left:570px;top:361px;width:1437px;height:53px;background:linear-gradient(#f5f7fa,#eef1f5);border-top:1px solid #a4a9b2;border-bottom:1px solid #a9aeb7;"></div>
<span class="t" style="left:573.00px;top:376.00px;font-size:30px;line-height:30px;color:#3c424b;letter-spacing:0.921px;">Anordnen nach: Datum</span>
<div style="left:1733.5px;top:366px;width:1px;height:45px;background:#b5bbc5;"></div>
<span class="t" style="left:1737.60px;top:376.00px;font-size:30px;line-height:30px;color:#3c424b;letter-spacing:0.815px;">Neu nach alt</span>
<svg style="left:1976px;top:364px" width="30" height="15" viewBox="0 0 30 15"><path d="M0.500 0.500 L29.500 0.500 L15 14.500 Z" fill="#a9aeb7"/></svg>
<div style="left:2007px;top:362px;width:21px;height:532px;background:linear-gradient(90deg,#eceef1,#fbfbfc 50%,#f0f2f4);border-left:1px solid #dfe2e7;"></div>
<div style="left:2007.5px;top:362px;width:19.5px;height:20.5px;background:linear-gradient(#f6f7f9,#e9ebef);border:1px solid #c3c8d0;border-radius:2px;"></div>
<svg style="left:2012px;top:369px" width="11" height="7" viewBox="0 0 11 7"><path d="M0 6.500 L5.500 0 L11 6.500 Z" fill="#9da2bd"/></svg>
<div style="left:2008px;top:872px;width:19px;height:20px;background:linear-gradient(#fafbfc,#e4e7ec);border:1px solid #bfc5ce;border-radius:2px;"></div>
<svg style="left:2012px;top:879px" width="11" height="7" viewBox="0 0 11 7"><path d="M0 0.500 L5.500 7 L11 0.500 Z" fill="#9da2bd"/></svg>
<span class="t" style="left:842.50px;top:429.00px;font-size:30px;line-height:30px;color:#000;letter-spacing:0.842px;">Es gibt keine Elemente, die in dieser Ansicht angezeigt werden.</span>
<div style="left:570px;top:893px;width:1458px;height:1px;background:#a7aeb9;"></div>
<div style="left:2029px;top:303px;width:4px;height:1547px;background:linear-gradient(90deg,rgba(160,165,178,.3),rgba(160,165,178,0));"></div>
<svg style="left:2044px;top:309px" width="12" height="14" viewBox="0 0 12 14"><path d="M3 2.500 L8 7 L3 11.500" fill="none" stroke="#3b4048" stroke-width="2.600"/></svg>
<svg style="left:2061px;top:332px" width="14" height="23" viewBox="0 0 14 23"><path d="M13 1 L1.500 11.500 L13 22 Z" fill="#2f2f2f"/></svg>
<svg style="left:2682px;top:332px" width="14" height="23" viewBox="0 0 14 23"><path d="M1 1 L12.500 11.500 L1 22 Z" fill="#2f2f2f"/></svg>
<span class="t" style="left:2143.60px;top:332.00px;font-size:24px;line-height:24px;color:#333;letter-spacing:0.253px;">Oktober 2017</span>
<span class="t" style="left:2448.80px;top:332.00px;font-size:24px;line-height:24px;color:#333;letter-spacing:0.371px;">November 2017</span>
<span class="t" style="left:2064.87px;top:371.00px;font-size:24.5px;line-height:24.5px;color:#333;">Mo</span>
<span class="t" style="left:2116.86px;top:371.00px;font-size:24.5px;line-height:24.5px;color:#333;">Di</span>
<span class="t" style="left:2154.95px;top:371.00px;font-size:24.5px;line-height:24.5px;color:#333;">Mi</span>
<span class="t" style="left:2190.38px;top:371.00px;font-size:24.5px;line-height:24.5px;color:#333;">Do</span>
<span class="t" style="left:2239.38px;top:371.00px;font-size:24.5px;line-height:24.5px;color:#333;">Fr</span>
<span class="t" style="left:2273.53px;top:371.00px;font-size:24.5px;line-height:24.5px;color:#333;">Sa</span>
<span class="t" style="left:2314.33px;top:371.00px;font-size:24.5px;line-height:24.5px;color:#333;">So</span>
<span class="t" style="left:2394.47px;top:371.00px;font-size:24.5px;line-height:24.5px;color:#333;">Mo</span>
<span class="t" style="left:2446.36px;top:371.00px;font-size:24.5px;line-height:24.5px;color:#333;">Di</span>
<span class="t" style="left:2484.65px;top:371.00px;font-size:24.5px;line-height:24.5px;color:#333;">Mi</span>
<span class="t" style="left:2520.18px;top:371.00px;font-size:24.5px;line-height:24.5px;color:#333;">Do</span>
<span class="t" style="left:2569.38px;top:371.00px;font-size:24.5px;line-height:24.5px;color:#333;">Fr</span>
<span class="t" style="left:2603.53px;top:371.00px;font-size:24.5px;line-height:24.5px;color:#333;">Sa</span>
<span class="t" style="left:2644.93px;top:371.00px;font-size:24.5px;line-height:24.5px;color:#333;">So</span>
<div style="left:2077px;top:400px;width:289px;height:1px;background:linear-gradient(90deg,rgba(215,219,226,0),#d9dde3 15%);"></div>
<div style="left:2398px;top:400px;width:298px;height:1px;background:linear-gradient(90deg,rgba(215,219,226,0),#d9dde3 15%);"></div>
<div style="left:2308px;top:440.5px;width:41.5px;height:37.5px;border:1px solid #e0813a;"></div>
<span class="t" style="left:2071.40px;top:411.00px;font-size:24px;line-height:24px;color:#a9afb8;font-weight:bold;letter-spacing:0.308px;">25</span>
<span class="t" style="left:2114.30px;top:411.00px;font-size:24px;line-height:24px;color:#a9afb8;letter-spacing:-1.492px;">26</span>
<span class="t" style="left:2153.30px;top:411.00px;font-size:24px;line-height:24px;color:#a9afb8;font-weight:bold;letter-spacing:0.308px;">27</span>
<span class="t" style="left:2196.00px;top:411.00px;font-size:24px;line-height:24px;color:#a9afb8;letter-spacing:-1.492px;">28</span>
<span class="t" style="left:2236.80px;top:411.00px;font-size:24px;line-height:24px;color:#a9afb8;letter-spacing:-1.492px;">29</span>
<span class="t" style="left:2276.00px;top:411.00px;font-size:24px;line-height:24px;color:#a9afb8;font-weight:bold;letter-spacing:0.308px;">30</span>
<span class="t" style="left:2330.45px;top:411.00px;font-size:24px;line-height:24px;color:#333;font-weight:bold;">1</span>
<span class="t" style="left:2085.05px;top:449.00px;font-size:24px;line-height:24px;color:#333;">2</span>
<span class="t" style="left:2126.15px;top:449.00px;font-size:24px;line-height:24px;color:#333;">3</span>
<span class="t" style="left:2166.95px;top:449.00px;font-size:24px;line-height:24px;color:#333;font-weight:bold;">4</span>
<span class="t" style="left:2207.85px;top:449.00px;font-size:24px;line-height:24px;color:#333;">5</span>
<span class="t" style="left:2248.65px;top:449.00px;font-size:24px;line-height:24px;color:#333;">6</span>
<span class="t" style="left:2289.65px;top:449.00px;font-size:24px;line-height:24px;color:#333;">7</span>
<span class="t" style="left:2330.45px;top:449.00px;font-size:24px;line-height:24px;color:#333;">8</span>
<span class="t" style="left:2085.05px;top:487.00px;font-size:24px;line-height:24px;color:#333;">9</span>
<span class="t" style="left:2112.50px;top:487.00px;font-size:24px;line-height:24px;color:#333;font-weight:bold;letter-spacing:0.308px;">10</span>
<span class="t" style="left:2153.30px;top:487.00px;font-size:24px;line-height:24px;color:#333;font-weight:bold;letter-spacing:1.631px;">11</span>
<span class="t" style="left:2196.00px;top:487.00px;font-size:24px;line-height:24px;color:#333;letter-spacing:-1.492px;">12</span>
<span class="t" style="left:2236.80px;top:487.00px;font-size:24px;line-height:24px;color:#333;letter-spacing:-1.492px;">13</span>
<span class="t" style="left:2277.80px;top:487.00px;font-size:24px;line-height:24px;color:#333;letter-spacing:-1.492px;">14</span>
<span class="t" style="left:2318.60px;top:487.00px;font-size:24px;line-height:24px;color:#333;letter-spacing:-1.492px;">15</span>
<span class="t" style="left:2073.20px;top:525.00px;font-size:24px;line-height:24px;color:#333;letter-spacing:-1.492px;">16</span>
<span class="t" style="left:2114.30px;top:525.00px;font-size:24px;line-height:24px;color:#333;letter-spacing:-1.492px;">17</span>
<span class="t" style="left:2153.30px;top:525.00px;font-size:24px;line-height:24px;color:#333;font-weight:bold;letter-spacing:0.308px;">18</span>
<span class="t" style="left:2196.00px;top:525.00px;font-size:24px;line-height:24px;color:#333;letter-spacing:-1.492px;">19</span>
<span class="t" style="left:2236.80px;top:525.00px;font-size:24px;line-height:24px;color:#333;letter-spacing:-1.492px;">20</span>
<span class="t" style="left:2276.00px;top:525.00px;font-size:24px;line-height:24px;color:#333;font-weight:bold;letter-spacing:0.308px;">21</span>
<span class="t" style="left:2316.80px;top:525.00px;font-size:24px;line-height:24px;color:#333;font-weight:bold;letter-spacing:0.308px;">22</span>
<span class="t" style="left:2073.20px;top:563.00px;font-size:24px;line-height:24px;color:#333;letter-spacing:-1.492px;">23</span>
<span class="t" style="left:2114.30px;top:563.00px;font-size:24px;line-height:24px;color:#333;letter-spacing:-1.492px;">24</span>
<span class="t" style="left:2153.30px;top:563.00px;font-size:24px;line-height:24px;color:#333;font-weight:bold;letter-spacing:0.308px;">25</span>
<span class="t" style="left:2196.00px;top:563.00px;font-size:24px;line-height:24px;color:#333;letter-spacing:-1.492px;">26</span>
<span class="t" style="left:2236.80px;top:563.00px;font-size:24px;line-height:24px;color:#333;letter-spacing:-1.492px;">27</span>
<span class="t" style="left:2276.00px;top:563.00px;font-size:24px;line-height:24px;color:#333;font-weight:bold;letter-spacing:0.308px;">28</span>
<span class="t" style="left:2316.80px;top:563.00px;font-size:24px;line-height:24px;color:#333;font-weight:bold;letter-spacing:0.308px;">29</span>
<span class="t" style="left:2071.40px;top:601.00px;font-size:24px;line-height:24px;color:#333;font-weight:bold;letter-spacing:0.308px;">30</span>
<span class="t" style="left:2114.30px;top:601.00px;font-size:24px;line-height:24px;color:#333;letter-spacing:-1.492px;">31</span>
<span class="t" style="left:2496.65px;top:411.00px;font-size:24px;line-height:24px;color:#333;font-weight:bold;">1</span>
<span class="t" style="left:2537.65px;top:411.00px;font-size:24px;line-height:24px;color:#333;">2</span>
<span class="t" style="left:2578.65px;top:411.00px;font-size:24px;line-height:24px;color:#333;">3</span>
<span class="t" style="left:2619.65px;top:411.00px;font-size:24px;line-height:24px;color:#333;">4</span>
<span class="t" style="left:2661.05px;top:411.00px;font-size:24px;line-height:24px;color:#333;">5</span>
<span class="t" style="left:2414.65px;top:449.00px;font-size:24px;line-height:24px;color:#333;">6</span>
<span class="t" style="left:2455.65px;top:449.00px;font-size:24px;line-height:24px;color:#333;">7</span>
<span class="t" style="left:2496.65px;top:449.00px;font-size:24px;line-height:24px;color:#333;font-weight:bold;">8</span>
<span class="t" style="left:2537.65px;top:449.00px;font-size:24px;line-height:24px;color:#333;">9</span>
<span class="t" style="left:2566.80px;top:449.00px;font-size:24px;line-height:24px;color:#333;letter-spacing:-1.492px;">10</span>
<span class="t" style="left:2606.00px;top:449.00px;font-size:24px;line-height:24px;color:#333;font-weight:bold;letter-spacing:1.631px;">11</span>
<span class="t" style="left:2649.20px;top:449.00px;font-size:24px;line-height:24px;color:#333;letter-spacing:-1.492px;">12</span>
<span class="t" style="left:2402.80px;top:487.00px;font-size:24px;line-height:24px;color:#333;letter-spacing:-1.492px;">13</span>
<span class="t" style="left:2443.80px;top:487.00px;font-size:24px;line-height:24px;color:#333;letter-spacing:-1.492px;">14</span>
<span class="t" style="left:2483.00px;top:487.00px;font-size:24px;line-height:24px;color:#333;font-weight:bold;letter-spacing:0.308px;">15</span>
<span class="t" style="left:2525.80px;top:487.00px;font-size:24px;line-height:24px;color:#333;letter-spacing:-1.492px;">16</span>
<span class="t" style="left:2565.00px;top:487.00px;font-size:24px;line-height:24px;color:#333;font-weight:bold;letter-spacing:0.308px;">17</span>
<span class="t" style="left:2606.00px;top:487.00px;font-size:24px;line-height:24px;color:#333;font-weight:bold;letter-spacing:0.308px;">18</span>
<span class="t" style="left:2647.40px;top:487.00px;font-size:24px;line-height:24px;color:#333;font-weight:bold;letter-spacing:0.308px;">19</span>
<span class="t" style="left:2402.80px;top:525.00px;font-size:24px;line-height:24px;color:#333;letter-spacing:-1.492px;">20</span>
<span class="t" style="left:2443.80px;top:525.00px;font-size:24px;line-height:24px;color:#333;letter-spacing:-1.492px;">21</span>
<span class="t" style="left:2483.00px;top:525.00px;font-size:24px;line-height:24px;color:#333;font-weight:bold;letter-spacing:0.308px;">22</span>
<span class="t" style="left:2525.80px;top:525.00px;font-size:24px;line-height:24px;color:#333;letter-spacing:-1.492px;">23</span>
<span class="t" style="left:2566.80px;top:525.00px;font-size:24px;line-height:24px;color:#333;letter-spacing:-1.492px;">24</span>
<span class="t" style="left:2606.00px;top:525.00px;font-size:24px;line-height:24px;color:#333;font-weight:bold;letter-spacing:0.308px;">25</span>
<span class="t" style="left:2649.20px;top:525.00px;font-size:24px;line-height:24px;color:#333;letter-spacing:-1.492px;">26</span>
<span class="t" style="left:2402.80px;top:563.00px;font-size:24px;line-height:24px;color:#333;letter-spacing:-1.492px;">27</span>
<span class="t" style="left:2443.80px;top:563.00px;font-size:24px;line-height:24px;color:#333;letter-spacing:-1.492px;">28</span>
<span class="t" style="left:2483.00px;top:563.00px;font-size:24px;line-height:24px;color:#333;font-weight:bold;letter-spacing:0.308px;">29</span>
<span class="t" style="left:2524.00px;top:563.00px;font-size:24px;line-height:24px;color:#333;font-weight:bold;letter-spacing:0.308px;">30</span>
<span class="t" style="left:2578.65px;top:563.00px;font-size:24px;line-height:24px;color:#a9afb8;">1</span>
<span class="t" style="left:2619.65px;top:563.00px;font-size:24px;line-height:24px;color:#a9afb8;">2</span>
<span class="t" style="left:2661.05px;top:563.00px;font-size:24px;line-height:24px;color:#a9afb8;">3</span>
<span class="t" style="left:2414.65px;top:601.00px;font-size:24px;line-height:24px;color:#a9afb8;font-weight:bold;">4</span>
<span class="t" style="left:2455.65px;top:601.00px;font-size:24px;line-height:24px;color:#a9afb8;">5</span>
<span class="t" style="left:2496.65px;top:601.00px;font-size:24px;line-height:24px;color:#a9afb8;font-weight:bold;">6</span>
<span class="t" style="left:2537.65px;top:601.00px;font-size:24px;line-height:24px;color:#a9afb8;">7</span>
<span class="t" style="left:2578.65px;top:601.00px;font-size:24px;line-height:24px;color:#a9afb8;font-weight:bold;">8</span>
<span class="t" style="left:2619.65px;top:601.00px;font-size:24px;line-height:24px;color:#a9afb8;">9</span>
<span class="t" style="left:2649.20px;top:601.00px;font-size:24px;line-height:24px;color:#a9afb8;letter-spacing:-1.492px;">10</span>
<div style="left:2048.5px;top:632px;width:648px;height:1px;background:repeating-linear-gradient(90deg,#444 0 1px,transparent 1px 2px);"></div>
<div style="left:2696px;top:632px;width:1px;height:12px;background:repeating-linear-gradient(#444 0 1px,transparent 1px 2px);"></div>
<div style="left:2048px;top:633px;width:1px;height:18px;background:repeating-linear-gradient(#444 0 1px,transparent 1px 2px);"></div>
<div style="left:2048.5px;top:650px;width:58px;height:1px;background:repeating-linear-gradient(90deg,#444 0 1px,transparent 1px 2px);"></div>
<span class="t" style="left:2048.60px;top:635.00px;font-size:14px;line-height:14px;color:#3a3a3a;font-weight:bold;letter-spacing:-0.303px;">Dienstag</span>
<div style="left:2047px;top:656.7px;width:70px;height:66px;background:linear-gradient(#dbe6f6,#c3d4ee 55%,#b3c8e8);border:1px solid #a3b8da;"></div>
<span class="t" style="left:2054.50px;top:662.00px;font-size:13.5px;line-height:13.5px;color:#000;font-weight:bold;letter-spacing:-0.7px;">TODEST</span>
<span class="t" style="left:2054.50px;top:680.00px;font-size:14px;line-height:14px;color:#000;font-weight:bold;letter-spacing:0.35px;">68 €</span>
<span class="t" style="left:2054.50px;top:699.00px;font-size:14px;line-height:14px;color:#222;">07:00 - 0</span>
<span class="t" style="left:2048.60px;top:736.00px;font-size:14px;line-height:14px;color:#3a3a3a;font-weight:bold;letter-spacing:0.25px;">Mittwoch</span>
<div style="left:2047px;top:757.6px;width:70px;height:66px;background:linear-gradient(#dbe6f6,#c3d4ee 55%,#b3c8e8);border:1px solid #a3b8da;"></div>
<span class="t" style="left:2054.50px;top:763.00px;font-size:13.5px;line-height:13.5px;color:#000;font-weight:bold;letter-spacing:-0.7px;">WERBUN</span>
<span class="t" style="left:2054.50px;top:781.00px;font-size:14px;line-height:14px;color:#222;">07:00 - 1</span>
<span class="t" style="left:2048.60px;top:837.00px;font-size:14px;line-height:14px;color:#3a3a3a;font-weight:bold;letter-spacing:0.25px;">Mittwoch</span>
<div style="left:2047px;top:858.4px;width:70px;height:66px;background:linear-gradient(#dbe6f6,#c3d4ee 55%,#b3c8e8);border:1px solid #a3b8da;"></div>
<span class="t" style="left:2054.50px;top:864.00px;font-size:13.5px;line-height:13.5px;color:#000;font-weight:bold;letter-spacing:-0.7px;">WERBUN</span>
<span class="t" style="left:2054.50px;top:882.00px;font-size:14px;line-height:14px;color:#222;">07:00 - 1</span>
<span class="t" style="left:2048.60px;top:938.00px;font-size:14px;line-height:14px;color:#3a3a3a;font-weight:bold;letter-spacing:0.25px;">Samstag,</span>
<div style="left:2047px;top:959.3px;width:70px;height:66px;background:linear-gradient(#dbe6f6,#c3d4ee 55%,#b3c8e8);border:1px solid #a3b8da;"></div>
<span class="t" style="left:2054.50px;top:965.00px;font-size:13.5px;line-height:13.5px;color:#000;font-weight:bold;letter-spacing:-0.7px;">STERBET</span>
<span class="t" style="left:2054.50px;top:983.00px;font-size:14px;line-height:14px;color:#222;">10:00 - 1</span>
<span class="t" style="left:2048.60px;top:1039.00px;font-size:14px;line-height:14px;color:#3a3a3a;font-weight:bold;letter-spacing:0.25px;">Sonntag,</span>
<div style="left:2047px;top:1060.2px;width:70px;height:66px;background:linear-gradient(#dbe6f6,#c3d4ee 55%,#b3c8e8);border:1px solid #a3b8da;"></div>
<span class="t" style="left:2054.50px;top:1066.00px;font-size:13.5px;line-height:13.5px;color:#000;font-weight:bold;letter-spacing:-0.7px;">GEBURT</span>
<span class="t" style="left:2054.50px;top:1084.00px;font-size:14px;line-height:14px;color:#222;">09:00 - 0</span>
<span class="t" style="left:2048.60px;top:1140.00px;font-size:14px;line-height:14px;color:#3a3a3a;font-weight:bold;letter-spacing:0.25px;">Mittwoch</span>
<div style="left:2047px;top:1161.6px;width:70px;height:66px;background:linear-gradient(#dbe6f6,#c3d4ee 55%,#b3c8e8);border:1px solid #a3b8da;"></div>
<span class="t" style="left:2054.50px;top:1167.00px;font-size:13.5px;line-height:13.5px;color:#000;font-weight:bold;letter-spacing:-0.7px;">WERBUN</span>
<span class="t" style="left:2054.50px;top:1185.00px;font-size:14px;line-height:14px;color:#222;">07:00 - 1</span>
<span class="t" style="left:2048.60px;top:1240.00px;font-size:14px;line-height:14px;color:#3a3a3a;font-weight:bold;letter-spacing:0.25px;">Donnerst</span>
<div style="left:2047px;top:1262px;width:70px;height:28.5px;background:linear-gradient(#dbe6f6,#b9cceb);border:1px solid #a3b8da;"></div>
<div style="left:2048px;top:1263px;width:5.5px;height:26.5px;background:#fff;"></div>
<span class="t" style="left:2058.80px;top:1267.00px;font-size:14px;line-height:14px;color:#000;font-weight:bold;letter-spacing:0.3px;">Nationa</span>
<span class="t" style="left:2048.60px;top:1304.00px;font-size:14px;line-height:14px;color:#3a3a3a;font-weight:bold;letter-spacing:0.25px;">Samstag,</span>
<div style="left:2047px;top:1325.3px;width:70px;height:66.3px;background:linear-gradient(#dbe6f6,#c3d4ee 55%,#b3c8e8);border:1px solid #a3b8da;"></div>
<span class="t" style="left:2054.50px;top:1330.00px;font-size:14px;line-height:14px;color:#000;font-weight:bold;letter-spacing:0.35px;">Karl Me</span>
<span class="t" style="left:2054.50px;top:1349.00px;font-size:14px;line-height:14px;color:#000;font-weight:bold;letter-spacing:0.35px;">28.10.19</span>
<span class="t" style="left:2054.50px;top:1367.00px;font-size:14px;line-height:14px;color:#222;">07:00 - 1</span>
<span class="t" style="left:2048.60px;top:1405.00px;font-size:14px;line-height:14px;color:#3a3a3a;font-weight:bold;letter-spacing:0.25px;">Sonntag,</span>
<div style="left:2047px;top:1426px;width:70px;height:66.4px;background:linear-gradient(#dbe6f6,#c3d4ee 55%,#b3c8e8);border:1px solid #a3b8da;"></div>
<span class="t" style="left:2054.50px;top:1431.00px;font-size:14px;line-height:14px;color:#000;font-weight:bold;letter-spacing:0.35px;">Serap Z</span>
<span class="t" style="left:2054.50px;top:1449.00px;font-size:14px;line-height:14px;color:#222;">07:00 - 1</span>
<span class="t" style="left:2048.60px;top:1506.00px;font-size:14px;line-height:14px;color:#3a3a3a;font-weight:bold;letter-spacing:0.25px;">Montag,</span>
<div style="left:2047px;top:1527px;width:70px;height:66.6px;background:linear-gradient(#dbe6f6,#c3d4ee 55%,#b3c8e8);border:1px solid #a3b8da;"></div>
<span class="t" style="left:2054.50px;top:1533.00px;font-size:13.5px;line-height:13.5px;color:#000;font-weight:bold;letter-spacing:-0.7px;">GEBURT</span>
<span class="t" style="left:2054.50px;top:1550.00px;font-size:14px;line-height:14px;color:#222;">07:00 - 1</span>
<span class="t" style="left:2048.60px;top:1607.00px;font-size:14px;line-height:14px;color:#3a3a3a;font-weight:bold;letter-spacing:0.25px;">Mittwoch</span>
<div style="left:2047px;top:1628.5px;width:70px;height:28.5px;background:linear-gradient(#dbe6f6,#b9cceb);border:1px solid #a3b8da;"></div>
<div style="left:2048px;top:1629.5px;width:5.5px;height:26.5px;background:#fff;"></div>
<span class="t" style="left:2058.80px;top:1633.00px;font-size:14px;line-height:14px;color:#000;font-weight:bold;letter-spacing:0.3px;">Allerhe</span>
<div style="left:2047px;top:1665.3px;width:70px;height:66.6px;background:linear-gradient(#dbe6f6,#c3d4ee 55%,#b3c8e8);border:1px solid #a3b8da;"></div>
<span class="t" style="left:2054.50px;top:1671.00px;font-size:13.5px;line-height:13.5px;color:#000;font-weight:bold;letter-spacing:-0.7px;">WERBUN</span>
<span class="t" style="left:2054.50px;top:1689.00px;font-size:14px;line-height:14px;color:#222;">07:00 - 1</span>
<div style="left:2107px;top:644px;width:603px;height:1088px;background:#fff;"></div>
<div style="left:2039.5px;top:1746px;width:665.5px;height:5px;background:#e9ecf1;border:1px solid #aeb5c0;"></div>
<span class="t" style="left:2042.50px;top:1762.00px;font-size:14px;line-height:14px;color:#333;letter-spacing:-0.318px;">Anordnen nach: Kennzeichen: Fällig am</span>
<div style="left:2563px;top:1760px;width:1px;height:21px;background:#b4bac4;"></div>
<span class="t" style="left:2567.00px;top:1762.00px;font-size:14px;line-height:14px;color:#333;letter-spacing:-0.215px;">Heute zuerst</span>
<svg style="left:2671px;top:1762px" width="10" height="7" viewBox="0 0 10 7"><path d="M0.500 6.500 L5 0.500 L9.500 6.500 Z" fill="#b9bec7"/></svg>
<div style="left:2039px;top:1782px;width:644px;height:1px;background:#bcc2cc;"></div>
<div style="left:2684px;top:1755px;width:20px;height:90px;background:linear-gradient(90deg,#e0e4ea,#e9ecf1);"></div>
<svg style="left:2687px;top:1762px" width="13" height="8" viewBox="0 0 13 8"><path d="M0.500 7.500 L6.500 0.500 L12.500 7.500 Z" fill="#7d838d"/></svg>
<svg style="left:2687px;top:1829px" width="13" height="8" viewBox="0 0 13 8"><path d="M0.500 0.500 L6.500 7.500 L12.500 0.500 Z" fill="#7d838d"/></svg>
<div style="left:2041px;top:1785.5px;width:640px;height:27.5px;background:#fff;border:1px solid #a9b0bb;"></div>
<span class="t" style="left:2049.30px;top:1792.00px;font-size:14px;line-height:14px;color:#8a8a8a;letter-spacing:-0.227px;">Neue Aufgabe eingeben</span>
<span class="t" style="left:2172.00px;top:1822.00px;font-size:14px;line-height:14px;color:#222;letter-spacing:-0.211px;">Es gibt keine Elemente, die in dieser Ansicht angezeigt werden.</span>
<div style="left:2202px;top:1856px;width:3px;height:44px;background:linear-gradient(90deg,#b9bcc2,#8d9096 50%,#b9bcc2);"></div>
<div style="left:2205px;top:1856px;width:2px;height:44px;background:rgba(255,255,255,.55);"></div>
<div style="left:2209.5px;top:1852.5px;width:42.5px;height:45px;background:linear-gradient(#fde9a2,#fbd768 45%,#f9cb4c 55%,#fde08a);border:1px solid #d8a93a;border-radius:3px;"></div>
<svg style="left:2218px;top:1864px" width="26" height="22" viewBox="0 0 26 22"><rect x="1.500" y="1.500" width="23" height="19" fill="#fff" stroke="#3c3c3c" stroke-width="3"/><path d="M6.500 2v18M19.500 2v18" stroke="#3c3c3c" stroke-width="2"/></svg>
<svg style="left:2264px;top:1863px" width="27" height="26" viewBox="0 0 27 26"><path d="M2 3 L11 3 L13.500 5 L16 3 L25 3 L25 19 L16 19 L13.500 21 L11 19 L2 19 Z" fill="#fff" stroke="#444" stroke-width="1.800"/><path d="M13.500 5v19M5 7h5M5 10.500h5M5 14h5M17 7h5M17 10.500h5M17 14h5" stroke="#444" stroke-width="1.600"/></svg>
<span class="t" style="left:2306.70px;top:1865.00px;font-size:22px;line-height:22px;color:#9a9a9a;letter-spacing:-0.769px;">100 %</span>
<div style="left:2395px;top:1875px;width:265px;height:1px;background:#a9aeb6;"></div>
<div style="left:2525px;top:1869px;width:1px;height:13px;background:#a9aeb6;"></div>
<svg style="left:2377px;top:1859px" width="34" height="34" viewBox="0 0 34 34"><circle cx="17" cy="17" r="15.500" fill="#eef0f3" stroke="#d5d9df" stroke-width="1.500"/><rect x="9" y="15.500" width="16" height="3" fill="#c4c8cf"/></svg>
<svg style="left:2643px;top:1859px" width="34" height="34" viewBox="0 0 34 34"><circle cx="17" cy="17" r="15.500" fill="#eef0f3" stroke="#d5d9df" stroke-width="1.500"/><rect x="9" y="15.500" width="16" height="3" fill="#c4c8cf"/><rect x="15.500" y="9" width="3" height="16" fill="#c4c8cf"/></svg>
<svg style="left:2688px;top:1872px" width="20" height="26" viewBox="0 0 20 26"><g fill="#b1b6be"><rect x="14" y="2" width="4" height="4"/><rect x="14" y="10" width="4" height="4"/><rect x="7" y="10" width="4" height="4"/><rect x="14" y="18" width="4" height="4"/><rect x="7" y="18" width="4" height="4"/><rect x="0" y="18" width="4" height="4"/></g></svg>
<svg style="left:60px;top:113px" width="74" height="78" viewBox="0 0 74 78"><defs><linearGradient id="ne" x1="0" y1="0" x2="1" y2="1"><stop offset="0" stop-color="#ffffff"/><stop offset="1" stop-color="#dbe6f4"/></linearGradient>
<linearGradient id="nd" x1="0" y1="0" x2="0" y2="1"><stop offset="0" stop-color="#ffffff"/><stop offset="1" stop-color="#dfe5ee"/></linearGradient></defs>
<path d="M12 22 L30 4 L52 4 L68 21 L68 59 L12 59 Z" fill="url(#ne)" stroke="#808b9c" stroke-width="2"/>
<path d="M12 22 L68 22" stroke="#8e99aa" stroke-width="1.600"/>
<rect x="57" y="27" width="7" height="9" fill="#dc4a36"/>
<path d="M4 31 L33 31 L44 42 L44 73 L4 73 Z" fill="url(#nd)" stroke="#8a94a4" stroke-width="2"/><path d="M33 31 L33 42 L44 42" fill="#d5dbe5" stroke="#8a94a4" stroke-width="1.600"/>
<g stroke="#c3cad6" stroke-width="2"><path d="M9 44h20M9 49h27M9 54h27M9 59h27M9 64h27M9 69h27"/></g></svg>
<span class="t" style="left:70.70px;top:200.00px;font-size:22px;line-height:22px;color:#262626;">Neue</span>
<span class="t" style="left:10.60px;top:231.00px;font-size:22px;line-height:22px;color:#262626;letter-spacing:0.655px;">E-Mail-Nachricht</span>
<svg style="left:211px;top:120px" width="72" height="70" viewBox="0 0 72 70"><rect x="3" y="4" width="48" height="36" fill="#f4f7fb" stroke="#9aa6b8" stroke-width="1.500"/><rect x="11" y="9" width="14" height="4" fill="#8d8d8d"/><path d="M30 11h14" stroke="#7f97d8" stroke-width="2"/>
<rect x="10" y="15" width="48" height="36" fill="#f4f7fb" stroke="#9aa6b8" stroke-width="1.500"/>
<rect x="19" y="24" width="48" height="41" fill="#fff" stroke="#7f8ca8" stroke-width="1.600"/><rect x="19.800" y="24.800" width="46.400" height="8" fill="#6c8fe0"/>
<g stroke="#aab4c8" stroke-width="1.300"><path d="M19 42h48M19 50h48M19 58h48M28.500 33v32M38 33v32M47.500 33v32M57 33v32"/></g>
<g stroke="#55627e" stroke-width="1.800"><path d="M25 20v9M32 20v9M39 20v9M46 20v9M53 20v9M60 20v9"/></g>
<rect x="48.500" y="43" width="9" height="9" fill="#fff" stroke="#e24a2a" stroke-width="2.200"/></svg>
<span class="t" style="left:218.70px;top:200.00px;font-size:22px;line-height:22px;color:#262626;">Neue</span>
<span class="t" style="left:190.00px;top:231.00px;font-size:22px;line-height:22px;color:#262626;letter-spacing:0.081px;">Elemente</span>
<svg style="left:290px;top:235.5px" width="10" height="6" viewBox="0 0 10 6"><path d="M0.300 0.500 L9.700 0.500 L5 5.500 Z" fill="#5a5a5a"/></svg>
<svg style="left:341px;top:114px" width="66" height="76" viewBox="0 0 66 76"><defs><linearGradient id="tv" x1="0" y1="0" x2="1" y2="1"><stop offset="0" stop-color="#1aa0f4"/><stop offset="1" stop-color="#0a55c8"/></linearGradient></defs>
<path d="M4 6 Q4 2 9 3 L52 10 Q58 11 58 17 L60 64 Q60 71 53 70 L12 66 Q6 65 6 59 Z" fill="url(#tv)"/>
<path d="M52 10 Q58 11 58 17 L60 64 Q60 71 53 70 L51 64 L50 16 Z" fill="#0b49b0"/>
<ellipse cx="29" cy="38" rx="21" ry="23" fill="#eef1f6"/><ellipse cx="29" cy="31" rx="19" ry="14" fill="#fff" opacity=".7"/>
<path d="M9 38 L20 30 L20 35 L38 35 L38 30 L49 38 L38 46 L38 41 L20 41 L20 46 Z" fill="#1670d8"/></svg>
<span class="t" style="left:343.05px;top:200.00px;font-size:22px;line-height:22px;color:#262626;letter-spacing:-0.273px;">Neues</span>
<span class="t" style="left:332.00px;top:231.00px;font-size:22px;line-height:22px;color:#262626;letter-spacing:0.956px;">Meeting</span>
<svg style="left:449px;top:120px" width="33" height="28" viewBox="0 0 33 28"><path d="M2 2 L9 9 M9 2 L2 9" stroke="#e0301e" stroke-width="2"/>
<rect x="9" y="6" width="20" height="14" fill="#f9e9a8" stroke="#d5b45a"/><rect x="11" y="9" width="20" height="14" fill="#f9e59a" stroke="#d5b45a"/>
<rect x="13.500" y="12.500" width="18.500" height="13" fill="#f8dd78" stroke="#c9a23c"/><path d="M14 13 L22.750 21 L31.500 13" fill="none" stroke="#c9a23c" stroke-width="1.200"/></svg>
<span class="t" style="left:487.70px;top:125.00px;font-size:22px;line-height:22px;color:#262626;letter-spacing:0.424px;">Aufräumen</span>
<svg style="left:608px;top:131px" width="10" height="6" viewBox="0 0 10 6"><path d="M0.300 0.500 L9.700 0.500 L5 5.500 Z" fill="#5a5a5a"/></svg>
<svg style="left:450px;top:160px" width="33" height="32" viewBox="0 0 33 32"><circle cx="9" cy="6.500" r="5" fill="#8f9499" stroke="#666a70"/><path d="M1 22 Q1 12 9 12 Q17 12 17 22 Z" fill="#4a7be0" stroke="#2f58b4"/>
<circle cx="21" cy="21" r="9" fill="#fff" stroke="#e0341c" stroke-width="3.400"/><path d="M15 27 L27 15" stroke="#e0341c" stroke-width="3.400"/></svg>
<span class="t" style="left:487.00px;top:167.00px;font-size:22px;line-height:22px;color:#262626;letter-spacing:0.187px;">Junk-E-Mail</span>
<svg style="left:614px;top:173px" width="10" height="6" viewBox="0 0 10 6"><path d="M0.300 0.500 L9.700 0.500 L5 5.500 Z" fill="#5a5a5a"/></svg>
<svg style="left:642px;top:120px" width="63" height="58" viewBox="0 0 63 58"><defs><filter id="bl" x="-10%" y="-10%" width="120%" height="120%"><feGaussianBlur stdDeviation="0.7"/></filter></defs>
<g filter="url(#bl)"><path d="M2 4 Q6 0 13 4 Q29 15 37 29 Q45 42 51 49 L48 51 Q39 43 30 33 Q19 20 4 11 Z" fill="#a9a9a9"/>
<path d="M58 1 L60 4 Q41 16 31 30 Q21 45 13 53 Q6 56 4 49 Q10 38 24 24 Q38 10 58 1 Z" fill="#a3a3a3"/></g></svg>
<span class="t" style="left:632.00px;top:200.00px;font-size:22px;line-height:22px;color:#9c9c9c;letter-spacing:-0.295px;">Löschen</span>
<svg style="left:748px;top:120px" width="67" height="65" viewBox="0 0 67 65"><defs><linearGradient id="dg" x1="0" y1="0" x2="0" y2="1"><stop offset="0" stop-color="#f3f1f4"/><stop offset="1" stop-color="#e2e0e5"/></linearGradient>
<linearGradient id="ag" x1="0" y1="0" x2="0" y2="1"><stop offset="0" stop-color="#c4c4c7"/><stop offset="1" stop-color="#98989c"/></linearGradient></defs><path d="M2 20 L14 8 L41 8 L54 20 L54 53 L2 53 Z" fill="url(#dg)" stroke="#c4c1c9" stroke-width="1.500"/>
<path d="M4 23 L52 23 L44 35 L12 35 Z" fill="#e4e1e7"/>
<path d="M2 21 L13 35 L43 35 L54 21 M2 53 L19 36 M54 53 L37 36" fill="none" stroke="#d2cfd6" stroke-width="1.300"/><path d="M2.500 53 L53.500 53" stroke="#b9b6be" stroke-width="2"/><path d="M35 50 L46 38.500 L46 44.500 L61 44.500 L61 56 L46 56 L46 62 Z" fill="url(#ag)" stroke="#a5a5a9"/></svg>
<span class="t" style="left:728.60px;top:200.00px;font-size:22px;line-height:22px;color:#9c9c9c;letter-spacing:0.794px;">Antworten</span>
<svg style="left:858px;top:120px" width="67" height="65" viewBox="0 0 67 65"><defs><linearGradient id="dg" x1="0" y1="0" x2="0" y2="1"><stop offset="0" stop-color="#f3f1f4"/><stop offset="1" stop-color="#e2e0e5"/></linearGradient>
<linearGradient id="ag" x1="0" y1="0" x2="0" y2="1"><stop offset="0" stop-color="#c4c4c7"/><stop offset="1" stop-color="#98989c"/></linearGradient></defs><path d="M21 15 L33 3 L53 3 L64 14 L64 46 L21 46 Z" fill="url(#dg)" stroke="#c4c1c9" stroke-width="1.500"/><path d="M2 20 L14 8 L41 8 L54 20 L54 53 L2 53 Z" fill="url(#dg)" stroke="#c4c1c9" stroke-width="1.500"/>
<path d="M4 23 L52 23 L44 35 L12 35 Z" fill="#e4e1e7"/>
<path d="M2 21 L13 35 L43 35 L54 21 M2 53 L19 36 M54 53 L37 36" fill="none" stroke="#d2cfd6" stroke-width="1.300"/><path d="M2.500 53 L53.500 53" stroke="#b9b6be" stroke-width="2"/><path d="M35 50 L46 38.500 L46 44.500 L61 44.500 L61 56 L46 56 L46 62 Z" fill="url(#ag)" stroke="#a5a5a9"/></svg>
<span class="t" style="left:865.80px;top:200.00px;font-size:22px;line-height:22px;color:#9c9c9c;letter-spacing:0.570px;">Allen</span>
<span class="t" style="left:840.80px;top:231.00px;font-size:22px;line-height:22px;color:#9c9c9c;letter-spacing:0.699px;">antworten</span>
<svg style="left:977px;top:120px" width="67" height="65" viewBox="0 0 67 65"><defs><linearGradient id="dg" x1="0" y1="0" x2="0" y2="1"><stop offset="0" stop-color="#f3f1f4"/><stop offset="1" stop-color="#e2e0e5"/></linearGradient>
<linearGradient id="ag" x1="0" y1="0" x2="0" y2="1"><stop offset="0" stop-color="#c4c4c7"/><stop offset="1" stop-color="#98989c"/></linearGradient></defs><path d="M2 20 L14 8 L41 8 L54 20 L54 53 L2 53 Z" fill="url(#dg)" stroke="#c4c1c9" stroke-width="1.500"/>
<path d="M4 23 L52 23 L44 35 L12 35 Z" fill="#e4e1e7"/>
<path d="M2 21 L13 35 L43 35 L54 21 M2 53 L19 36 M54 53 L37 36" fill="none" stroke="#d2cfd6" stroke-width="1.300"/><path d="M2.500 53 L53.500 53" stroke="#b9b6be" stroke-width="2"/><path d="M64 50 L51 37.500 L51 44.500 L32 44.500 L32 56 L51 56 L51 62.500 Z" fill="url(#ag)" stroke="#a5a5a9"/></svg>
<span class="t" style="left:949.70px;top:200.00px;font-size:22px;line-height:22px;color:#9c9c9c;letter-spacing:0.641px;">Weiterleiten</span>
<svg style="left:1080px;top:138px" width="34" height="33" viewBox="0 0 34 33"><rect x="1" y="5" width="24" height="20" fill="#f3f3f4" stroke="#b5b5b9"/><g stroke="#c9c9cd" stroke-width="1"><path d="M1 10h24M1 15h24M1 20h24M7 8v16M13 8v16M19 8v16"/></g>
<g stroke="#9d9da1" stroke-width="1.200"><path d="M4 2v4M8 2v4M12 2v4M16 2v4M20 2v4M23 2v4"/></g><path d="M14 25 L23 18 L23 22 L32 22 L32 29 L23 29 L23 32 Z" fill="#b4b4b7" stroke="#9f9fa3"/></svg>
<span class="t" style="left:1119.00px;top:147.00px;font-size:22px;line-height:22px;color:#9c9c9c;letter-spacing:0.136px;">Besprechung</span>
<svg style="left:1080px;top:202px" width="34" height="33" viewBox="0 0 34 33"><rect x="1" y="5" width="24" height="20" fill="#f3f3f4" stroke="#b5b5b9"/><g stroke="#c9c9cd" stroke-width="1"><path d="M1 10h24M1 15h24M1 20h24M7 8v16M13 8v16M19 8v16"/></g>
<g stroke="#9d9da1" stroke-width="1.200"><path d="M4 2v4M8 2v4M12 2v4M16 2v4M20 2v4M23 2v4"/></g><rect x="10" y="13" width="22" height="15" fill="#ececee" stroke="#b0b0b4"/><path d="M10 13 L21 22 L32 13" fill="none" stroke="#b0b0b4"/><path d="M15 24 Q17 30 23 29 L22 27 L27 30 L22 33 L22.500 31 Q15 32 15 24Z" fill="#a8a8ac"/></svg>
<span class="t" style="left:1119.00px;top:211.00px;font-size:22px;line-height:22px;color:#9c9c9c;letter-spacing:0.268px;">Weitere</span>
<svg style="left:1204px;top:217px" width="10" height="6" viewBox="0 0 10 6"><path d="M0.300 0.500 L9.700 0.500 L5 5.500 Z" fill="#c3c3c3"/></svg>
<div style="left:1265px;top:116px;width:556px;height:138px;background:#fff;border:1px solid #c8cdd5;"></div>
<div style="left:1788px;top:116px;width:33px;height:138px;background:linear-gradient(90deg,#f3f4f6,#e6e8ec);border:1px solid #c8cdd5;"></div>
<div style="left:1788px;top:163px;width:33px;height:1px;background:#c8cdd5;"></div>
<div style="left:1788px;top:208px;width:33px;height:1px;background:#c8cdd5;"></div>
<div style="left:1789px;top:209px;width:31px;height:43px;background:#fff;"></div>
<svg style="left:1799px;top:136px" width="11" height="7" viewBox="0 0 11 7"><path d="M0.500 6.500 L5.500 0.500 L10.500 6.500 Z" fill="#c3c6cc"/></svg>
<svg style="left:1799px;top:182px" width="11" height="7" viewBox="0 0 11 7"><path d="M0.500 0.500 L5.500 6.500 L10.500 0.500 Z" fill="#c3c6cc"/></svg>
<svg style="left:1798px;top:224px" width="14" height="13" viewBox="0 0 14 13"><rect x="0.500" y="1" width="13" height="1.800" fill="#444"/><path d="M1.500 5.500 L12.500 5.500 L7 12 Z" fill="#444"/></svg>
<svg style="left:1270px;top:128px" width="32" height="30" viewBox="0 0 32 30"><path d="M1 1 L14 1 L20 7 L20 24 L1 24 Z" fill="#f5f4f6" stroke="#cfcdd3"/><path d="M14 1 L14 7 L20 7" fill="none" stroke="#cfcdd3"/>
<path d="M8 13 L15 13 L17 16 L30 16 L30 29 L8 29 Z" fill="#e4e2e7" stroke="#c6c4cb"/><path d="M22 2 Q28 2 27 9 L30 9 L26 14 L21 9 L24 9 Q24.500 5 22 5 Z" fill="#b9b9bd"/></svg>
<span class="t" style="left:1310.00px;top:137.00px;font-size:22px;line-height:22px;color:#9c9c9c;letter-spacing:0.033px;">Verschieben in: ?</span>
<svg style="left:1270px;top:168px" width="31" height="32" viewBox="0 0 31 32"><path d="M6 10 L15 2 L22 2 L29 10 L29 24 L6 24 Z" fill="#f2f6fb" stroke="#8fa0bb" stroke-width="1.200"/><rect x="24" y="11" width="3" height="4" fill="#d7402e"/>
<path d="M1 13 L13 13 L18 18 L18 31 L1 31 Z" fill="#fff" stroke="#8fa0bb" stroke-width="1.200"/><g stroke="#9db4dc" stroke-width="1.200"><path d="M4 19h10M4 22h11M4 25h11M4 28h11"/></g></svg>
<span class="t" style="left:1310.00px;top:177.00px;font-size:22px;line-height:22px;color:#1e1e1e;letter-spacing:0.555px;">Team-E-Mail</span>
<svg style="left:1271px;top:211px" width="30" height="30" viewBox="0 0 30 30"><path d="M1 8 L8 2 L16 2 L23 8 L23 21 L1 21 Z" fill="#efeef1" stroke="#c9c7ce"/><path d="M1 9 L12 16 L23 9" fill="none" stroke="#c9c7ce"/>
<path d="M13 24 L20 18 L20 21.500 L28 21.500 L28 27 L20 27 L20 30 Z" fill="#b5b5b9" stroke="#a2a2a6"/></svg>
<span class="t" style="left:1310.00px;top:217.00px;font-size:22px;line-height:22px;color:#9c9c9c;letter-spacing:0.328px;">Antworten und lösc...</span>
<svg style="left:1531px;top:130px" width="30" height="29" viewBox="0 0 30 29"><path d="M1 8 L8 2 L16 2 L23 8 L23 21 L1 21 Z" fill="#efeef1" stroke="#c9c7ce"/><path d="M1 9 L12 16 L23 9" fill="none" stroke="#c9c7ce"/>
<path d="M29 23 L22 17 L22 20.500 L14 20.500 L14 26 L22 26 L22 29 Z" fill="#b5b5b9" stroke="#a2a2a6"/></svg>
<span class="t" style="left:1570.00px;top:137.00px;font-size:22px;line-height:22px;color:#9c9c9c;letter-spacing:0.245px;">An Vorgesetzte(n)</span>
<svg style="left:1531px;top:172px" width="30" height="26" viewBox="0 0 30 26"><path d="M2 15 L6 11 L11 17 L26 2 L29 5 L11 25 Z" fill="#a9a9ac" stroke="#8f8f93"/></svg>
<span class="t" style="left:1570.00px;top:177.00px;font-size:22px;line-height:22px;color:#9c9c9c;letter-spacing:0.559px;">Erledigt</span>
<svg style="left:1531px;top:209px" width="30" height="32" viewBox="0 0 30 32"><path d="M13 6 L27 6 L19 15 L25 15 L9 30 L14 18 L8 18 Z" fill="#f7d04a" stroke="#c8981e" stroke-width="1.300"/>
<g stroke="#e3b62a" stroke-width="1.600"><path d="M5 2v8M1 6h8M2 3l6 6M8 3l-6 6"/></g></svg>
<span class="t" style="left:1570.00px;top:217.00px;font-size:22px;line-height:22px;color:#1e1e1e;letter-spacing:0.315px;">Neu erstellen</span>
<svg style="left:1802px;top:274px" width="14" height="14" viewBox="0 0 14 14"><path d="M1 9 L1 1 L9 1" fill="none" stroke="#8c929b" stroke-width="1.400"/><path d="M5 5 L12 12 M12 6.500 L12 12 L6.500 12" fill="none" stroke="#8c929b" stroke-width="1.600"/></svg>
<svg style="left:1866px;top:120px" width="66" height="66" viewBox="0 0 66 66"><path d="M2 3 L30 3 L42 15 L42 50 L2 50 Z" fill="#f3f2f4" stroke="#d3d1d7" stroke-width="1.400"/><path d="M30 3 L30 15 L42 15" fill="#e9e8ec" stroke="#d3d1d7" stroke-width="1.400"/>
<path d="M20 30 L34 30 L38 35 L63 35 L63 62 L20 62 Z" fill="#e3e1e6" stroke="#cfcdd3" stroke-width="1.400"/>
<path d="M45 9 Q55 7 54.500 19 L59 19 L52 27 L45 19 L49.500 19 Q50 12.500 45 13 Z" fill="#c6c6ca" stroke="#b0b0b4" stroke-width=".8"/></svg>
<span class="t" style="left:1836.25px;top:200.00px;font-size:22px;line-height:22px;color:#9c9c9c;letter-spacing:0.342px;">Verschieben</span>
<svg style="left:1893.5px;top:237px" width="10" height="6" viewBox="0 0 10 6"><path d="M0.300 0.500 L9.700 0.500 L5 5.500 Z" fill="#c6c6c6"/></svg>
<svg style="left:1977px;top:138px" width="33" height="29" viewBox="0 0 33 29"><path d="M1 10 L9 2 L24 2 L32 10 L32 28 L1 28 Z" fill="#f0eff2" stroke="#cfcdd3" stroke-width="1.300"/><path d="M1 11 L16.500 20 L32 11" fill="none" stroke="#cfcdd3" stroke-width="1.300"/></svg>
<span class="t" style="left:2015.60px;top:147.00px;font-size:22px;line-height:22px;color:#9c9c9c;letter-spacing:0.378px;">Ungelesen/gelesen</span>
<svg style="left:1979px;top:205px" width="30" height="30" viewBox="0 0 30 30"><rect x="1" y="1" width="12.500" height="12.500" fill="#c9c8cc"/><rect x="16" y="1" width="12.500" height="12.500" fill="#e1e0e4"/><rect x="1" y="16" width="12.500" height="12.500" fill="#dddce0"/><rect x="16" y="16" width="12.500" height="12.500" fill="#cfced2"/></svg>
<span class="t" style="left:2015.60px;top:211.00px;font-size:22px;line-height:22px;color:#9c9c9c;letter-spacing:0.319px;">Kategorisieren</span>
<svg style="left:2169px;top:217px" width="10" height="6" viewBox="0 0 10 6"><path d="M0.300 0.500 L9.700 0.500 L5 5.500 Z" fill="#c3c3c3"/></svg>
<div style="left:2224.5px;top:113.5px;width:180px;height:49px;background:#fff;border:1px solid #dfe2e7;"></div>
<span class="t" style="left:2227.60px;top:124.00px;font-size:22px;line-height:22px;color:#6b6b6b;letter-spacing:0.258px;">Kontakt suchen</span>
<svg style="left:2390px;top:136px" width="9" height="5" viewBox="0 0 9 5"><path d="M0.300 0.300 L8.700 0.300 L4.500 4.700 Z" fill="#444"/></svg>
<svg style="left:2229px;top:169px" width="32" height="28" viewBox="0 0 32 28"><path d="M2 4 Q9 1 16 4 Q23 1 30 4 L30 25 Q23 22 16 25 Q9 22 2 25 Z" fill="#fbfbfd" stroke="#6f7681" stroke-width="1.600"/><path d="M16 4v21" stroke="#6f7681" stroke-width="1.400"/>
<circle cx="9" cy="9" r="3" fill="#e89a3a"/><path d="M4.500 18 Q4.500 12.500 9 12.500 Q13.500 12.500 13.500 18 Z" fill="#d9502e"/>
<circle cx="23" cy="9" r="3" fill="#e8b37a"/><path d="M18.500 18 Q18.500 12.500 23 12.500 Q27.500 12.500 27.500 18 Z" fill="#4e9a3c"/><rect x="30" y="6" width="2" height="4" fill="#d44"/><rect x="30" y="12" width="2" height="4" fill="#4a4"/></svg>
<span class="t" style="left:2266.50px;top:175.00px;font-size:22px;line-height:22px;color:#262626;letter-spacing:0.259px;">Adressbuch</span>
<svg style="left:2228px;top:212px" width="33" height="27" viewBox="0 0 33 27"><defs><linearGradient id="fu" x1="0" y1="0" x2="1" y2="0"><stop offset="0" stop-color="#d9d9dc"/><stop offset="1" stop-color="#85858a"/></linearGradient></defs>
<path d="M1 1.500 L32 1.500 L19.500 14 L19.500 24 L13.500 26.500 L13.500 14 Z" fill="url(#fu)" stroke="#77777c" stroke-width="1.200"/></svg>
<span class="t" style="left:2266.50px;top:217.00px;font-size:22px;line-height:22px;color:#262626;letter-spacing:0.674px;">E-Mail filtern</span>
<svg style="left:2406px;top:223px" width="10" height="6" viewBox="0 0 10 6"><path d="M0.300 0.500 L9.700 0.500 L5 5.500 Z" fill="#5a5a5a"/></svg>
<svg style="left:2492px;top:113px" width="76" height="78" viewBox="0 0 76 78"><defs><linearGradient id="sr" x1="0" y1="0" x2="1" y2="1"><stop offset="0" stop-color="#ffffff"/><stop offset="1" stop-color="#d5e0f0"/></linearGradient></defs>
<g stroke="#a9b2c0" stroke-width="2"><path d="M58 8h9M58 15h9M58 22h9M58 29h9M58 36h9M4 46h9M4 53h9M4 60h9M4 67h9M4 74h9"/></g>
<rect x="3" y="3" width="56" height="35" fill="url(#sr)" stroke="#7d8aa3" stroke-width="2"/><rect x="47" y="7" width="7" height="9" fill="#dc4a36"/>
<g stroke="#4d74b4" stroke-width="2.200"><path d="M14 19h26M14 25h22M18 31h22"/></g>
<rect x="14" y="38" width="56" height="35" fill="url(#sr)" stroke="#7d8aa3" stroke-width="2"/><rect x="59" y="42" width="7" height="9" fill="#dc4a36"/>
<g stroke="#4d74b4" stroke-width="2.200"><path d="M24 55h28M24 61h24M28 67h22"/></g></svg>
<span class="t" style="left:2472.65px;top:200.00px;font-size:22px;line-height:22px;color:#262626;letter-spacing:0.504px;">Alle Ordner</span>
<span class="t" style="left:2431.40px;top:231.00px;font-size:22px;line-height:22px;color:#262626;letter-spacing:0.749px;">senden/empfangen</span>
</div></body></html>
